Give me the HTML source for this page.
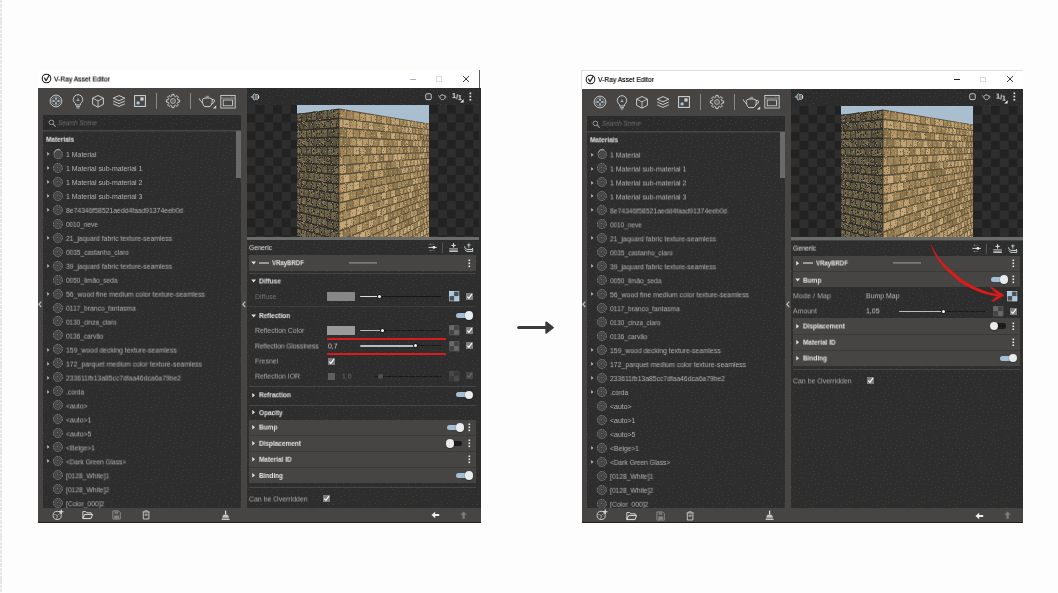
<!DOCTYPE html>
<html lang="en"><head><meta charset="utf-8"><title>V-Ray Asset Editor</title>
<style>
html,body{margin:0;padding:0;}
body{width:1058px;height:593px;position:relative;overflow:hidden;background:#fdfdfd;font-family:"Liberation Sans",sans-serif;}
.win{position:absolute;width:0;height:0;}
.win div,.win svg,.win span{position:absolute;}
.win svg{overflow:visible;}
.t{display:block;height:12px;line-height:12px;font-size:6.95px;white-space:nowrap;transform-origin:0 50%;}
.edge{position:absolute;left:0;top:0;width:1.8px;height:593px;background:repeating-linear-gradient(#e6e6e6 0 3.3px,#fbfbfb 3.3px 4.3px);}
.arrow{position:absolute;left:0;top:0;}
</style></head><body>
<div class="edge"></div>
<svg width="0" height="0" style="position:absolute"><defs><pattern id="dp" width="36" height="36" patternUnits="userSpaceOnUse"><path d="M15 34h1v1h-1zM8 23h1v1h-1zM30 4h1v1h-1zM0 30h1v1h-1zM14 12h1v1h-1zM30 34h1v1h-1zM25 9h1v1h-1zM14 9h1v1h-1zM33 24h1v1h-1zM0 4h1v1h-1zM10 2h1v1h-1zM19 1h1v1h-1zM17 30h1v1h-1zM24 27h1v1h-1zM6 2h1v1h-1zM8 31h1v1h-1zM13 16h1v1h-1zM27 19h1v1h-1zM26 32h1v1h-1zM24 22h1v1h-1zM14 21h1v1h-1zM1 17h1v1h-1zM10 20h1v1h-1zM18 7h1v1h-1zM4 30h1v1h-1zM22 4h1v1h-1zM27 26h1v1h-1zM2 24h1v1h-1zM15 2h1v1h-1zM4 6h1v1h-1zM12 26h1v1h-1zM18 16h1v1h-1zM21 20h1v1h-1zM24 35h1v1h-1zM17 27h1v1h-1zM27 16h1v1h-1zM33 19h1v1h-1zM3 21h1v1h-1zM29 22h1v1h-1zM22 17h1v1h-1zM31 1h1v1h-1zM3 1h1v1h-1zM20 11h1v1h-1zM20 23h1v1h-1zM1 8h1v1h-1zM10 5h1v1h-1zM2 33h1v1h-1zM22 8h1v1h-1zM9 12h1v1h-1zM32 27h1v1h-1zM35 14h1v1h-1zM30 7h1v1h-1zM22 14h1v1h-1zM34 7h1v1h-1zM10 15h1v1h-1zM25 3h1v1h-1zM32 31h1v1h-1zM8 35h1v1h-1z" fill="#3d3c38"/></pattern></defs></svg>
<div class="win" style="left:0px;top:0px"><div style="left:37.50px;top:69.50px;width:441.70px;height:19.00px;background:#ffffff;"></div>
<div style="left:479.20px;top:70.40px;width:1.20px;height:18.00px;background:#5a5a5a;"></div>
<svg style="left:41.00px;top:73.30px;" width="11" height="11" viewBox="0 0 11 11" fill="none"><circle cx="5.5" cy="5.5" r="4.3" stroke="#1c1c1c" stroke-width="1.05"/><path d="M3.3 4.6L5.1 7.7L8.3 2.0" stroke="#1c1c1c" stroke-width="1.15" stroke-linejoin="round"/></svg>
<span class="t" style="text-shadow:0 0 0.5px rgba(0,0,0,.55);left:54px;top:73px;color:#000;transform:perspective(1000px) translate3d(0,0.50px,0.1px) rotateX(0.5deg) scaleX(0.968);">V-Ray Asset Editor</span>
<div style="left:410.00px;top:78.90px;width:6.00px;height:0.90px;background:#9fb6c8;"></div>
<div style="left:436.20px;top:76.00px;width:5.80px;height:5.60px;background:transparent;border:0.8px solid #dadada;box-sizing:border-box;"></div>
<svg style="left:461.80px;top:74.90px;" width="8" height="8" viewBox="0 0 8 8" fill="none"><path d="M1 1L7 7M7 1L1 7" stroke="#1a1a1a" stroke-width="0.85"/></svg>
<div style="left:37.50px;top:88.00px;width:443.20px;height:434.60px;background:#464543;"></div>
<div style="left:479.20px;top:88.00px;width:1.50px;height:419.70px;background:#2c2c2c;"></div>
<div style="left:43.00px;top:115.20px;width:198.20px;height:15.30px;background:#2b2b2b;"></div>
<div style="left:43.00px;top:131.00px;width:198.20px;height:376.70px;background:#2e2e2e;border-top:0.8px solid #3a3a3a;box-sizing:border-box;"></div>
<svg style="left:43.00px;top:115.20px" width="198.20" height="392.50"><rect width="100%" height="100%" fill="url(#dp)"/></svg>
<div style="left:236.40px;top:131.30px;width:4.80px;height:46.70px;background:#6a6a6a;"></div>
<svg style="left:48.40px;top:93.30px;" width="16" height="16" viewBox="0 0 16 16" fill="none"><circle cx="8" cy="8" r="5.9" stroke="#d6d9dc" stroke-width="0.85"/><circle cx="8" cy="8" r="4.2" stroke="#a4a7aa" stroke-width="0.7"/><circle cx="8" cy="8" r="1.5" stroke="#b9bcbe" stroke-width="0.6"/><circle cx="8" cy="5.4" r="1.0" fill="#a9c3d8"/><circle cx="8" cy="10.6" r="1.0" fill="#a9c3d8"/><circle cx="5.4" cy="8" r="1.0" fill="#a9c3d8"/><circle cx="10.6" cy="8" r="1.0" fill="#a9c3d8"/></svg>
<svg style="left:69.50px;top:93.10px;" width="16" height="16" viewBox="0 0 16 16" fill="none"><path d="M5.6 10.6C4.2 9.6 3.3 8.2 3.3 6.4A4.7 4.7 0 0 1 12.7 6.4C12.7 8.2 11.8 9.6 10.4 10.6V12H5.6Z" stroke="#d6d9dc" stroke-width="0.9"/><path d="M6 13.6H10M6.6 15H9.4" stroke="#d6d9dc" stroke-width="0.8"/><path d="M6.6 7.4H9.4M8 5.4V7.4" stroke="#a9c3d8" stroke-width="0.9"/></svg>
<svg style="left:90.30px;top:93.30px;" width="16" height="16" viewBox="0 0 16 16" fill="none"><path d="M8 2.5L13.4 5.1V11.3L8 14.2L2.6 11.3V5.1Z" stroke="#d6d9dc" stroke-width="0.9" stroke-linejoin="round"/><path d="M2.8 5.2L8 7.9L13.2 5.2M8 7.9V14" stroke="#d6d9dc" stroke-width="0.8"/></svg>
<svg style="left:111.40px;top:93.30px;" width="16" height="16" viewBox="0 0 16 16" fill="none"><path d="M8 2.6L13.8 5.2L8 7.8L2.2 5.2Z" stroke="#d6d9dc" stroke-width="0.9" stroke-linejoin="round"/><path d="M2.2 8L8 10.6L13.8 8" stroke="#d6d9dc" stroke-width="0.9" stroke-linejoin="round"/><path d="M2.2 10.8L8 13.4L13.8 10.8" stroke="#d6d9dc" stroke-width="0.9" stroke-linejoin="round"/></svg>
<svg style="left:132.20px;top:93.30px;" width="16" height="16" viewBox="0 0 16 16" fill="none"><rect x="2.6" y="2.6" width="10.8" height="10.8" stroke="#d6d9dc" stroke-width="1"/><rect x="8.4" y="4.4" width="3.2" height="3.2" fill="#cfd3d6"/><circle cx="6.1" cy="9.9" r="1.7" fill="#a9c3d8"/></svg>
<div style="left:156.20px;top:93.20px;width:0.90px;height:16.00px;background:#8a8a8a;"></div>
<svg style="left:165.30px;top:93.20px;" width="16" height="16" viewBox="0 0 16 16" fill="none"><path d="M6.93 1.39L9.07 1.39L9.19 3.14L10.59 3.72L11.92 2.57L13.43 4.08L12.27 5.41L12.86 6.81L14.61 6.93L14.61 9.07L12.86 9.19L12.28 10.59L13.43 11.92L11.92 13.43L10.59 12.27L9.19 12.86L9.07 14.61L6.93 14.61L6.81 12.86L5.41 12.28L4.08 13.43L2.57 11.92L3.73 10.59L3.14 9.19L1.39 9.07L1.39 6.93L3.14 6.81L3.72 5.41L2.57 4.08L4.08 2.57L5.41 3.73L6.81 3.14Z" stroke="#d6d9dc" stroke-width="0.9" stroke-linejoin="round"/><circle cx="8" cy="8" r="2.4" stroke="#d6d9dc" stroke-width="0.8"/><circle cx="8" cy="8" r="0.8" fill="#9a9da0"/></svg>
<div style="left:190.00px;top:93.20px;width:0.90px;height:16.00px;background:#8a8a8a;"></div>
<svg style="left:198.00px;top:94.20px;" width="19" height="16" viewBox="0 0 19 16" fill="none"><rect x="7.8" y="1.8" width="3.2" height="1.8" fill="#8e8e8e"/><path d="M5.2 4.6C7 3.7 11.6 3.7 13.4 4.6C15 6.2 14.2 10.6 12 12.6H6.6C4.4 10.6 3.6 6.2 5.2 4.6Z" stroke="#d6d9dc" stroke-width="0.95" stroke-linejoin="round"/><path d="M4.7 8.6C3 8.2 2 6.4 1.4 4.8" stroke="#d6d9dc" stroke-width="0.95" stroke-linecap="round"/><path d="M14.2 5.6C16.4 4.6 17.2 6.4 16 8.2C15.2 9.3 14.4 9.9 13.6 10.2" stroke="#d6d9dc" stroke-width="0.95" stroke-linecap="round"/><path d="M18.2 11.2V14.6H14.8Z" fill="#d0d0d0"/></svg>
<svg style="left:219.60px;top:93.70px;" width="16" height="15" viewBox="0 0 16 15" fill="none"><rect x="0.8" y="1.4" width="14.4" height="12.6" stroke="#d6d9dc" stroke-width="0.85"/><path d="M1 4.1H15" stroke="#a7acb0" stroke-width="0.8"/><rect x="3.2" y="6" width="9.2" height="5.8" stroke="#d6d9dc" stroke-width="0.8"/><path d="M13.8 5.6V12.6" stroke="#8a8d90" stroke-width="0.8" stroke-dasharray="1 0.8"/><path d="M11.2 2.8H14" stroke="#8a8d90" stroke-width="0.7" stroke-dasharray="0.8 0.6"/></svg>
<svg style="left:47.90px;top:119.20px;" width="8" height="8" viewBox="0 0 8 8" fill="none"><circle cx="3.4" cy="3.4" r="2.3" stroke="#9a9a9a" stroke-width="0.95"/><path d="M5.1 5.1L7.3 7.3" stroke="#9a9a9a" stroke-width="1.1" stroke-linecap="round"/></svg>
<span class="t" style="left:58px;top:117px;color:#6c6c6c;font-style:italic;transform:perspective(1000px) translate3d(0,0.30px,0.1px) rotateX(0.5deg) scaleX(0.892);">Search Scene</span>
<span class="t" style="left:46px;top:133px;color:#e4e4e4;font-weight:700;transform:perspective(1000px) translate3d(0,0.80px,0.1px) rotateX(0.5deg) scaleX(0.934);">Materials</span>
<svg style="left:46.90px;top:152.06px;" width="2.8" height="3.78" viewBox="0 0 4 5.4" fill="none"><path d="M0.3 0.1L3.5 2.7L0.3 5.3Z" fill="#bcbcbc"/></svg>
<svg style="left:52.00px;top:147.85px;" width="12" height="12" viewBox="0 0 12 12" fill="none"><circle cx="6.2" cy="6.4" r="4.1" fill="#3a3a3a" stroke="#8e8e8e" stroke-width="0.7"/><circle cx="6.3" cy="6.6" r="2.6" fill="#474747" stroke="#6a6a6a" stroke-width="0.5" stroke-dasharray="1.2 0.7"/><path d="M2.2 4.6A4.6 4.6 0 0 1 6.4 1.2" stroke="#b4b4b4" stroke-width="0.8"/><path d="M5.6 1.9L7.1 0.9L8.4 2.4" stroke="#b4b4b4" stroke-width="0.7"/></svg>
<span class="t" style="left:66px;top:149px;color:#b2b2b2;transform:perspective(1000px) translate3d(0,0.05px,0.1px) rotateX(0.5deg);">1 Material</span>
<svg style="left:46.90px;top:166.03px;" width="2.8" height="3.78" viewBox="0 0 4 5.4" fill="none"><path d="M0.3 0.1L3.5 2.7L0.3 5.3Z" fill="#bcbcbc"/></svg>
<svg style="left:52.00px;top:161.82px;" width="12" height="12" viewBox="0 0 12 12" fill="none"><circle cx="5.9" cy="6" r="4.5" fill="#3c3c3c" stroke="#949494" stroke-width="0.7" stroke-dasharray="2.2 0.5"/><circle cx="5.9" cy="6" r="2.9" fill="#444" stroke="#6e6e6e" stroke-width="0.55" stroke-dasharray="1.3 0.8"/><circle cx="5.7" cy="5.6" r="0.5" fill="#8a8a8a"/></svg>
<span class="t" style="left:66px;top:163px;color:#b2b2b2;transform:perspective(1000px) translate3d(0,0.02px,0.1px) rotateX(0.5deg);">1 Material sub-material 1</span>
<svg style="left:46.90px;top:180.00px;" width="2.8" height="3.78" viewBox="0 0 4 5.4" fill="none"><path d="M0.3 0.1L3.5 2.7L0.3 5.3Z" fill="#bcbcbc"/></svg>
<svg style="left:52.00px;top:175.79px;" width="12" height="12" viewBox="0 0 12 12" fill="none"><circle cx="5.9" cy="6" r="4.5" fill="#3c3c3c" stroke="#949494" stroke-width="0.7" stroke-dasharray="2.2 0.5"/><circle cx="5.9" cy="6" r="2.9" fill="#444" stroke="#6e6e6e" stroke-width="0.55" stroke-dasharray="1.3 0.8"/><circle cx="5.7" cy="5.6" r="0.5" fill="#8a8a8a"/></svg>
<span class="t" style="left:66px;top:176px;color:#b2b2b2;transform:perspective(1000px) translate3d(0,0.99px,0.1px) rotateX(0.5deg);">1 Material sub-material 2</span>
<svg style="left:46.90px;top:193.97px;" width="2.8" height="3.78" viewBox="0 0 4 5.4" fill="none"><path d="M0.3 0.1L3.5 2.7L0.3 5.3Z" fill="#bcbcbc"/></svg>
<svg style="left:52.00px;top:189.76px;" width="12" height="12" viewBox="0 0 12 12" fill="none"><circle cx="5.9" cy="6" r="4.5" fill="#3c3c3c" stroke="#949494" stroke-width="0.7" stroke-dasharray="2.2 0.5"/><circle cx="5.9" cy="6" r="2.9" fill="#444" stroke="#6e6e6e" stroke-width="0.55" stroke-dasharray="1.3 0.8"/><circle cx="5.7" cy="5.6" r="0.5" fill="#8a8a8a"/></svg>
<span class="t" style="left:66px;top:190px;color:#b2b2b2;transform:perspective(1000px) translate3d(0,0.96px,0.1px) rotateX(0.5deg);">1 Material sub-material 3</span>
<svg style="left:46.90px;top:207.94px;" width="2.8" height="3.78" viewBox="0 0 4 5.4" fill="none"><path d="M0.3 0.1L3.5 2.7L0.3 5.3Z" fill="#bcbcbc"/></svg>
<svg style="left:52.00px;top:203.73px;" width="12" height="12" viewBox="0 0 12 12" fill="none"><circle cx="5.9" cy="6" r="4.5" fill="#3c3c3c" stroke="#949494" stroke-width="0.7" stroke-dasharray="2.2 0.5"/><circle cx="5.9" cy="6" r="2.9" fill="#444" stroke="#6e6e6e" stroke-width="0.55" stroke-dasharray="1.3 0.8"/><circle cx="5.7" cy="5.6" r="0.5" fill="#8a8a8a"/></svg>
<span class="t" style="left:66px;top:204px;color:#b2b2b2;transform:perspective(1000px) translate3d(0,0.93px,0.1px) rotateX(0.5deg) scaleX(0.979);">8e74346f58521aedd4faad91374eeb0d</span>
<svg style="left:52.00px;top:217.70px;" width="12" height="12" viewBox="0 0 12 12" fill="none"><circle cx="5.9" cy="6" r="4.5" fill="#3c3c3c" stroke="#949494" stroke-width="0.7" stroke-dasharray="2.2 0.5"/><circle cx="5.9" cy="6" r="2.9" fill="#444" stroke="#6e6e6e" stroke-width="0.55" stroke-dasharray="1.3 0.8"/><circle cx="5.7" cy="5.6" r="0.5" fill="#8a8a8a"/></svg>
<span class="t" style="left:66px;top:218px;color:#b2b2b2;transform:perspective(1000px) translate3d(0,0.90px,0.1px) rotateX(0.5deg) scaleX(0.925);">0010_neve</span>
<svg style="left:46.90px;top:235.88px;" width="2.8" height="3.78" viewBox="0 0 4 5.4" fill="none"><path d="M0.3 0.1L3.5 2.7L0.3 5.3Z" fill="#bcbcbc"/></svg>
<svg style="left:52.00px;top:231.67px;" width="12" height="12" viewBox="0 0 12 12" fill="none"><circle cx="5.9" cy="6" r="4.5" fill="#3c3c3c" stroke="#949494" stroke-width="0.7" stroke-dasharray="2.2 0.5"/><circle cx="5.9" cy="6" r="2.9" fill="#444" stroke="#6e6e6e" stroke-width="0.55" stroke-dasharray="1.3 0.8"/><circle cx="5.7" cy="5.6" r="0.5" fill="#8a8a8a"/></svg>
<span class="t" style="left:66px;top:232px;color:#b2b2b2;transform:perspective(1000px) translate3d(0,0.87px,0.1px) rotateX(0.5deg) scaleX(0.978);">21_jaquard fabric texture-seamless</span>
<svg style="left:52.00px;top:245.64px;" width="12" height="12" viewBox="0 0 12 12" fill="none"><circle cx="5.9" cy="6" r="4.5" fill="#3c3c3c" stroke="#949494" stroke-width="0.7" stroke-dasharray="2.2 0.5"/><circle cx="5.9" cy="6" r="2.9" fill="#444" stroke="#6e6e6e" stroke-width="0.55" stroke-dasharray="1.3 0.8"/><circle cx="5.7" cy="5.6" r="0.5" fill="#8a8a8a"/></svg>
<span class="t" style="left:66px;top:246px;color:#b2b2b2;transform:perspective(1000px) translate3d(0,0.84px,0.1px) rotateX(0.5deg) scaleX(0.945);">0035_castanho_claro</span>
<svg style="left:46.90px;top:263.82px;" width="2.8" height="3.78" viewBox="0 0 4 5.4" fill="none"><path d="M0.3 0.1L3.5 2.7L0.3 5.3Z" fill="#bcbcbc"/></svg>
<svg style="left:52.00px;top:259.61px;" width="12" height="12" viewBox="0 0 12 12" fill="none"><circle cx="5.9" cy="6" r="4.5" fill="#3c3c3c" stroke="#949494" stroke-width="0.7" stroke-dasharray="2.2 0.5"/><circle cx="5.9" cy="6" r="2.9" fill="#444" stroke="#6e6e6e" stroke-width="0.55" stroke-dasharray="1.3 0.8"/><circle cx="5.7" cy="5.6" r="0.5" fill="#8a8a8a"/></svg>
<span class="t" style="left:66px;top:260px;color:#b2b2b2;transform:perspective(1000px) translate3d(0,0.81px,0.1px) rotateX(0.5deg) scaleX(0.978);">39_jaquard fabric texture-seamless</span>
<svg style="left:52.00px;top:273.58px;" width="12" height="12" viewBox="0 0 12 12" fill="none"><circle cx="5.9" cy="6" r="4.5" fill="#3c3c3c" stroke="#949494" stroke-width="0.7" stroke-dasharray="2.2 0.5"/><circle cx="5.9" cy="6" r="2.9" fill="#444" stroke="#6e6e6e" stroke-width="0.55" stroke-dasharray="1.3 0.8"/><circle cx="5.7" cy="5.6" r="0.5" fill="#8a8a8a"/></svg>
<span class="t" style="left:66px;top:274px;color:#b2b2b2;transform:perspective(1000px) translate3d(0,0.78px,0.1px) rotateX(0.5deg) scaleX(0.938);">0050_limão_seda</span>
<svg style="left:46.90px;top:291.76px;" width="2.8" height="3.78" viewBox="0 0 4 5.4" fill="none"><path d="M0.3 0.1L3.5 2.7L0.3 5.3Z" fill="#bcbcbc"/></svg>
<svg style="left:52.00px;top:287.55px;" width="12" height="12" viewBox="0 0 12 12" fill="none"><circle cx="5.9" cy="6" r="4.5" fill="#3c3c3c" stroke="#949494" stroke-width="0.7" stroke-dasharray="2.2 0.5"/><circle cx="5.9" cy="6" r="2.9" fill="#444" stroke="#6e6e6e" stroke-width="0.55" stroke-dasharray="1.3 0.8"/><circle cx="5.7" cy="5.6" r="0.5" fill="#8a8a8a"/></svg>
<span class="t" style="left:66px;top:288px;color:#b2b2b2;transform:perspective(1000px) translate3d(0,0.75px,0.1px) rotateX(0.5deg) scaleX(0.996);">56_wood fine medium color texture-seamless</span>
<svg style="left:52.00px;top:301.52px;" width="12" height="12" viewBox="0 0 12 12" fill="none"><circle cx="5.9" cy="6" r="4.5" fill="#3c3c3c" stroke="#949494" stroke-width="0.7" stroke-dasharray="2.2 0.5"/><circle cx="5.9" cy="6" r="2.9" fill="#444" stroke="#6e6e6e" stroke-width="0.55" stroke-dasharray="1.3 0.8"/><circle cx="5.7" cy="5.6" r="0.5" fill="#8a8a8a"/></svg>
<span class="t" style="left:66px;top:302px;color:#b2b2b2;transform:perspective(1000px) translate3d(0,0.72px,0.1px) rotateX(0.5deg) scaleX(0.963);">0117_branco_fantasma</span>
<svg style="left:52.00px;top:315.49px;" width="12" height="12" viewBox="0 0 12 12" fill="none"><circle cx="5.9" cy="6" r="4.5" fill="#3c3c3c" stroke="#949494" stroke-width="0.7" stroke-dasharray="2.2 0.5"/><circle cx="5.9" cy="6" r="2.9" fill="#444" stroke="#6e6e6e" stroke-width="0.55" stroke-dasharray="1.3 0.8"/><circle cx="5.7" cy="5.6" r="0.5" fill="#8a8a8a"/></svg>
<span class="t" style="left:66px;top:316px;color:#b2b2b2;transform:perspective(1000px) translate3d(0,0.69px,0.1px) rotateX(0.5deg) scaleX(0.93);">0130_cinza_claro</span>
<svg style="left:52.00px;top:329.46px;" width="12" height="12" viewBox="0 0 12 12" fill="none"><circle cx="5.9" cy="6" r="4.5" fill="#3c3c3c" stroke="#949494" stroke-width="0.7" stroke-dasharray="2.2 0.5"/><circle cx="5.9" cy="6" r="2.9" fill="#444" stroke="#6e6e6e" stroke-width="0.55" stroke-dasharray="1.3 0.8"/><circle cx="5.7" cy="5.6" r="0.5" fill="#8a8a8a"/></svg>
<span class="t" style="left:66px;top:330px;color:#b2b2b2;transform:perspective(1000px) translate3d(0,0.66px,0.1px) rotateX(0.5deg) scaleX(0.93);">0136_carvão</span>
<svg style="left:46.90px;top:347.64px;" width="2.8" height="3.78" viewBox="0 0 4 5.4" fill="none"><path d="M0.3 0.1L3.5 2.7L0.3 5.3Z" fill="#bcbcbc"/></svg>
<svg style="left:52.00px;top:343.43px;" width="12" height="12" viewBox="0 0 12 12" fill="none"><circle cx="5.9" cy="6" r="4.5" fill="#3c3c3c" stroke="#949494" stroke-width="0.7" stroke-dasharray="2.2 0.5"/><circle cx="5.9" cy="6" r="2.9" fill="#444" stroke="#6e6e6e" stroke-width="0.55" stroke-dasharray="1.3 0.8"/><circle cx="5.7" cy="5.6" r="0.5" fill="#8a8a8a"/></svg>
<span class="t" style="left:66px;top:344px;color:#b2b2b2;transform:perspective(1000px) translate3d(0,0.63px,0.1px) rotateX(0.5deg) scaleX(0.984);">159_wood decking texture-seamless</span>
<svg style="left:46.90px;top:361.61px;" width="2.8" height="3.78" viewBox="0 0 4 5.4" fill="none"><path d="M0.3 0.1L3.5 2.7L0.3 5.3Z" fill="#bcbcbc"/></svg>
<svg style="left:52.00px;top:357.40px;" width="12" height="12" viewBox="0 0 12 12" fill="none"><circle cx="5.9" cy="6" r="4.5" fill="#3c3c3c" stroke="#949494" stroke-width="0.7" stroke-dasharray="2.2 0.5"/><circle cx="5.9" cy="6" r="2.9" fill="#444" stroke="#6e6e6e" stroke-width="0.55" stroke-dasharray="1.3 0.8"/><circle cx="5.7" cy="5.6" r="0.5" fill="#8a8a8a"/></svg>
<span class="t" style="left:66px;top:358px;color:#b2b2b2;transform:perspective(1000px) translate3d(0,0.60px,0.1px) rotateX(0.5deg) scaleX(0.991);">172_parquet medium color texture-seamless</span>
<svg style="left:46.90px;top:375.58px;" width="2.8" height="3.78" viewBox="0 0 4 5.4" fill="none"><path d="M0.3 0.1L3.5 2.7L0.3 5.3Z" fill="#bcbcbc"/></svg>
<svg style="left:52.00px;top:371.37px;" width="12" height="12" viewBox="0 0 12 12" fill="none"><circle cx="5.9" cy="6" r="4.5" fill="#3c3c3c" stroke="#949494" stroke-width="0.7" stroke-dasharray="2.2 0.5"/><circle cx="5.9" cy="6" r="2.9" fill="#444" stroke="#6e6e6e" stroke-width="0.55" stroke-dasharray="1.3 0.8"/><circle cx="5.7" cy="5.6" r="0.5" fill="#8a8a8a"/></svg>
<span class="t" style="left:66px;top:372px;color:#b2b2b2;transform:perspective(1000px) translate3d(0,0.57px,0.1px) rotateX(0.5deg) scaleX(0.975);">233611fb13a85cc7dfaa46dca6a79be2</span>
<svg style="left:46.90px;top:389.55px;" width="2.8" height="3.78" viewBox="0 0 4 5.4" fill="none"><path d="M0.3 0.1L3.5 2.7L0.3 5.3Z" fill="#bcbcbc"/></svg>
<svg style="left:52.00px;top:385.34px;" width="12" height="12" viewBox="0 0 12 12" fill="none"><circle cx="5.9" cy="6" r="4.5" fill="#3c3c3c" stroke="#949494" stroke-width="0.7" stroke-dasharray="2.2 0.5"/><circle cx="5.9" cy="6" r="2.9" fill="#444" stroke="#6e6e6e" stroke-width="0.55" stroke-dasharray="1.3 0.8"/><circle cx="5.7" cy="5.6" r="0.5" fill="#8a8a8a"/></svg>
<span class="t" style="left:66px;top:386px;color:#b2b2b2;transform:perspective(1000px) translate3d(0,0.54px,0.1px) rotateX(0.5deg) scaleX(0.94);">.corda</span>
<svg style="left:52.00px;top:399.31px;" width="12" height="12" viewBox="0 0 12 12" fill="none"><circle cx="5.9" cy="6" r="4.5" fill="#3c3c3c" stroke="#949494" stroke-width="0.7" stroke-dasharray="2.2 0.5"/><circle cx="5.9" cy="6" r="2.9" fill="#444" stroke="#6e6e6e" stroke-width="0.55" stroke-dasharray="1.3 0.8"/><circle cx="5.7" cy="5.6" r="0.5" fill="#8a8a8a"/></svg>
<span class="t" style="left:66px;top:400px;color:#b2b2b2;transform:perspective(1000px) translate3d(0,0.51px,0.1px) rotateX(0.5deg);">&lt;auto&gt;</span>
<svg style="left:52.00px;top:413.28px;" width="12" height="12" viewBox="0 0 12 12" fill="none"><circle cx="5.9" cy="6" r="4.5" fill="#3c3c3c" stroke="#949494" stroke-width="0.7" stroke-dasharray="2.2 0.5"/><circle cx="5.9" cy="6" r="2.9" fill="#444" stroke="#6e6e6e" stroke-width="0.55" stroke-dasharray="1.3 0.8"/><circle cx="5.7" cy="5.6" r="0.5" fill="#8a8a8a"/></svg>
<span class="t" style="left:66px;top:414px;color:#b2b2b2;transform:perspective(1000px) translate3d(0,0.48px,0.1px) rotateX(0.5deg);">&lt;auto&gt;1</span>
<svg style="left:52.00px;top:427.25px;" width="12" height="12" viewBox="0 0 12 12" fill="none"><circle cx="5.9" cy="6" r="4.5" fill="#3c3c3c" stroke="#949494" stroke-width="0.7" stroke-dasharray="2.2 0.5"/><circle cx="5.9" cy="6" r="2.9" fill="#444" stroke="#6e6e6e" stroke-width="0.55" stroke-dasharray="1.3 0.8"/><circle cx="5.7" cy="5.6" r="0.5" fill="#8a8a8a"/></svg>
<span class="t" style="left:66px;top:428px;color:#b2b2b2;transform:perspective(1000px) translate3d(0,0.45px,0.1px) rotateX(0.5deg);">&lt;auto&gt;5</span>
<svg style="left:46.90px;top:445.43px;" width="2.8" height="3.78" viewBox="0 0 4 5.4" fill="none"><path d="M0.3 0.1L3.5 2.7L0.3 5.3Z" fill="#bcbcbc"/></svg>
<svg style="left:52.00px;top:441.22px;" width="12" height="12" viewBox="0 0 12 12" fill="none"><circle cx="5.9" cy="6" r="4.5" fill="#3c3c3c" stroke="#949494" stroke-width="0.7" stroke-dasharray="2.2 0.5"/><circle cx="5.9" cy="6" r="2.9" fill="#444" stroke="#6e6e6e" stroke-width="0.55" stroke-dasharray="1.3 0.8"/><circle cx="5.7" cy="5.6" r="0.5" fill="#8a8a8a"/></svg>
<span class="t" style="left:66px;top:442px;color:#b2b2b2;transform:perspective(1000px) translate3d(0,0.42px,0.1px) rotateX(0.5deg) scaleX(0.98);">&lt;Beige&gt;1</span>
<svg style="left:46.90px;top:459.40px;" width="2.8" height="3.78" viewBox="0 0 4 5.4" fill="none"><path d="M0.3 0.1L3.5 2.7L0.3 5.3Z" fill="#bcbcbc"/></svg>
<svg style="left:52.00px;top:455.19px;" width="12" height="12" viewBox="0 0 12 12" fill="none"><circle cx="5.9" cy="6" r="4.5" fill="#3c3c3c" stroke="#949494" stroke-width="0.7" stroke-dasharray="2.2 0.5"/><circle cx="5.9" cy="6" r="2.9" fill="#444" stroke="#6e6e6e" stroke-width="0.55" stroke-dasharray="1.3 0.8"/><circle cx="5.7" cy="5.6" r="0.5" fill="#8a8a8a"/></svg>
<span class="t" style="left:66px;top:456px;color:#b2b2b2;transform:perspective(1000px) translate3d(0,0.39px,0.1px) rotateX(0.5deg) scaleX(0.947);">&lt;Dark Green Glass&gt;</span>
<svg style="left:52.00px;top:469.16px;" width="12" height="12" viewBox="0 0 12 12" fill="none"><circle cx="5.9" cy="6" r="4.5" fill="#3c3c3c" stroke="#949494" stroke-width="0.7" stroke-dasharray="2.2 0.5"/><circle cx="5.9" cy="6" r="2.9" fill="#444" stroke="#6e6e6e" stroke-width="0.55" stroke-dasharray="1.3 0.8"/><circle cx="5.7" cy="5.6" r="0.5" fill="#8a8a8a"/></svg>
<span class="t" style="left:66px;top:470px;color:#b2b2b2;transform:perspective(1000px) translate3d(0,0.36px,0.1px) rotateX(0.5deg) scaleX(0.964);">[0128_White]1</span>
<svg style="left:52.00px;top:483.13px;" width="12" height="12" viewBox="0 0 12 12" fill="none"><circle cx="5.9" cy="6" r="4.5" fill="#3c3c3c" stroke="#949494" stroke-width="0.7" stroke-dasharray="2.2 0.5"/><circle cx="5.9" cy="6" r="2.9" fill="#444" stroke="#6e6e6e" stroke-width="0.55" stroke-dasharray="1.3 0.8"/><circle cx="5.7" cy="5.6" r="0.5" fill="#8a8a8a"/></svg>
<span class="t" style="left:66px;top:484px;color:#b2b2b2;transform:perspective(1000px) translate3d(0,0.33px,0.1px) rotateX(0.5deg) scaleX(0.964);">[0128_White]2</span>
<svg style="left:52.00px;top:497.10px;" width="12" height="12" viewBox="0 0 12 12" fill="none"><circle cx="5.9" cy="6" r="4.5" fill="#3c3c3c" stroke="#949494" stroke-width="0.7" stroke-dasharray="2.2 0.5"/><circle cx="5.9" cy="6" r="2.9" fill="#444" stroke="#6e6e6e" stroke-width="0.55" stroke-dasharray="1.3 0.8"/><circle cx="5.7" cy="5.6" r="0.5" fill="#8a8a8a"/></svg>
<span class="t" style="left:66px;top:498px;color:#b2b2b2;transform:perspective(1000px) translate3d(0,0.30px,0.1px) rotateX(0.5deg) scaleX(0.964);">[Color_000]2</span>
<div style="left:37.50px;top:507.70px;width:443.20px;height:14.90px;background:#464543;"></div>
<div style="left:37.50px;top:521.90px;width:443.20px;height:0.70px;background:#222222;"></div>
<svg style="left:52.40px;top:508.60px;" width="12" height="12" viewBox="0 0 12 12" fill="none"><circle cx="5.2" cy="6.4" r="4.1" stroke="#d8d8d8" stroke-width="0.9"/><path d="M2.4 5.2L5.4 6.6L4.6 9.8M5.4 6.6L7.6 4.4" stroke="#bdbdbd" stroke-width="0.7"/><path d="M9.2 0.6V5M7 2.8H11.4" stroke="#eaeaea" stroke-width="1.05"/></svg>
<svg style="left:81.70px;top:510.40px;" width="11.4" height="10" viewBox="0 0 11.4 10" fill="none"><path d="M0.8 8.6V1.6H3.8L4.8 2.8H9.2V4.2" stroke="#e0e0e0" stroke-width="0.9" stroke-linejoin="round"/><path d="M0.9 8.6L2.6 4.4H10.6L9 8.6Z" stroke="#e8e8e8" stroke-width="0.95" stroke-linejoin="round" fill="#4d4d4d"/></svg>
<svg style="left:111.70px;top:510.40px;" width="9.2" height="10" viewBox="0 0 9.2 10" fill="none"><path d="M0.9 0.9H6.6L8.3 2.6V9.1H0.9Z" stroke="#8e8e8e" stroke-width="0.9" stroke-linejoin="round"/><rect x="2.6" y="1.2" width="3.6" height="2.6" fill="#7c7c7c"/><rect x="2.3" y="5.4" width="4.6" height="3.4" fill="#868686"/></svg>
<svg style="left:141.50px;top:510.00px;" width="8.2" height="10" viewBox="0 0 8.2 10" fill="none"><path d="M0.6 1.9H7.6" stroke="#d8d8d8" stroke-width="0.95"/><path d="M2.8 1.6V0.6H5.4V1.6" stroke="#c4c4c4" stroke-width="0.7"/><path d="M1.3 2.2V9H6.9V2.2" stroke="#d0d0d0" stroke-width="0.9" stroke-linejoin="round"/><rect x="2.6" y="3.6" width="3" height="2.2" fill="#9c9c9c"/></svg>
<svg style="left:221.40px;top:509.70px;" width="9.2" height="10.4" viewBox="0 0 9.2 10.4" fill="none"><path d="M4.6 0.6V4.6" stroke="#e8e8e8" stroke-width="1.2"/><path d="M2.4 4.8H6.8L7.8 7H1.4Z" fill="#c8c8c8"/><path d="M0.6 9.4H8.6M1.2 7.9H8" stroke="#e4e4e4" stroke-width="0.9"/></svg>
<svg style="left:430.90px;top:511.00px;" width="8.6" height="8" viewBox="0 0 8.6 8" fill="none"><path d="M0.5 4L4.2 0.8V2.9H8.2V5.1H4.2V7.2Z" fill="#f0f0f0"/></svg>
<svg style="left:460.40px;top:510.90px;" width="7.2" height="8.2" viewBox="0 0 7.2 8.2" fill="none"><path d="M3.6 0.4L6.8 3.8H4.8V7.8H2.4V3.8H0.4Z" fill="#7c7c7c"/></svg>
<svg style="left:38.20px;top:300.70px;" width="4" height="6.6" viewBox="0 0 4 6.6" fill="none"><path d="M3.3 0.6L0.8 3.3L3.3 6" stroke="#b8b8b8" stroke-width="1.3" stroke-linejoin="miter"/></svg>
<svg style="left:241.80px;top:300.70px;" width="4" height="6.6" viewBox="0 0 4 6.6" fill="none"><path d="M3.3 0.6L0.8 3.3L3.3 6" stroke="#b8b8b8" stroke-width="1.3" stroke-linejoin="miter"/></svg>
<div style="left:247.00px;top:88.00px;width:232.20px;height:17.00px;background:#2c2c2c;"></div>
<svg style="left:247.00px;top:88.00px" width="232.20" height="17.00"><rect width="100%" height="100%" fill="url(#dp)"/></svg>
<div style="left:247px;top:105px;width:50px;height:131.9px;background-color:#222222;background-image:conic-gradient(#2e2e2e 25%,#222222 0 50%,#2e2e2e 0 75%,#222222 0);background-size:17.6px 17.44px;background-position:-9.1px 0px;"></div>
<div style="left:429px;top:105px;width:50.20px;height:131.9px;background-color:#222222;background-image:conic-gradient(#2e2e2e 25%,#222222 0 50%,#2e2e2e 0 75%,#222222 0);background-size:17.6px 17.44px;background-position:0.4px 0px;"></div>
<div style="left:296.9px;top:105px;width:132.1px;height:132.3px;overflow:hidden"><svg width="132.1" height="132.3" viewBox="0 0 132.1 132.3" style="left:0;top:0"><g id="wallg"><defs><pattern id="wdl" width="20" height="20" patternUnits="userSpaceOnUse"><path d="M14 17h1v1h-1zM19 0h1v1h-1zM6 1h1v1h-1zM0 1h1v1h-1zM17 6h1v1h-1zM4 6h1v1h-1zM11 4h1v1h-1zM19 2h1v1h-1z" fill="#2f2e2b" opacity="1.0"/><path d="M14 16h1v1h-1zM15 19h1v1h-1zM5 19h1v1h-1zM16 2h1v1h-1zM10 14h1v1h-1zM9 15h1v1h-1zM0 2h1v1h-1zM3 12h1v1h-1zM9 12h1v1h-1zM0 13h1v1h-1zM4 7h1v1h-1zM16 6h1v1h-1zM13 12h1v1h-1zM0 8h1v1h-1zM5 12h1v1h-1zM18 3h1v1h-1zM8 0h1v1h-1zM2 2h1v1h-1zM7 0h1v1h-1zM11 11h1v1h-1zM14 4h1v1h-1zM15 18h1v1h-1zM12 15h1v1h-1zM2 13h1v1h-1zM3 3h1v1h-1zM16 5h1v1h-1zM19 19h1v1h-1zM14 7h1v1h-1zM11 16h1v1h-1zM10 16h1v1h-1zM4 18h1v1h-1zM9 1h1v1h-1zM10 4h1v1h-1zM17 11h1v1h-1z" fill="#2b2b2a" opacity="1.0"/><path d="M6 5h1v1h-1zM4 2h1v1h-1zM8 13h1v1h-1z" fill="#6a5f47" opacity="1.0"/><path d="M3 14h1v1h-1zM7 16h1v1h-1zM19 15h1v1h-1zM1 5h1v1h-1z" fill="#8a744e" opacity="1.0"/><path d="M1 19h1v1h-1zM12 12h1v1h-1zM10 9h1v1h-1zM12 8h1v1h-1z" fill="#3a3830" opacity="1.0"/><path d="M14 19h1v1h-1zM2 14h1v1h-1zM2 18h1v1h-1zM15 5h1v1h-1zM6 18h1v1h-1zM12 5h1v1h-1zM15 17h1v1h-1z" fill="#7f8a98" opacity="1.0"/><path d="M1 6h1v1h-1zM6 16h1v1h-1zM0 0h1v1h-1zM12 13h1v1h-1zM9 0h1v1h-1zM4 9h1v1h-1zM19 7h1v1h-1zM5 17h1v1h-1zM16 8h1v1h-1zM8 6h1v1h-1z" fill="#9f8355" opacity="1.0"/><path d="M2 8h1v1h-1zM6 8h1v1h-1zM2 9h1v1h-1zM0 15h1v1h-1z" fill="#33322e" opacity="1.0"/></pattern><pattern id="wdr" width="20" height="20" patternUnits="userSpaceOnUse"><path d="M4 10h1v1h-1zM4 15h1v1h-1zM1 2h1v1h-1zM8 18h1v1h-1zM6 0h1v1h-1zM18 16h1v1h-1zM12 2h1v1h-1zM17 10h1v1h-1z" fill="#cdae7c" opacity="1.0"/><path d="M2 15h1v1h-1zM0 19h1v1h-1zM14 17h1v1h-1zM16 16h1v1h-1zM9 19h1v1h-1zM15 8h1v1h-1zM10 2h1v1h-1zM8 19h1v1h-1zM9 18h1v1h-1zM7 4h1v1h-1zM3 14h1v1h-1zM17 11h1v1h-1z" fill="#87704a" opacity="1.0"/><path d="M13 0h1v1h-1zM3 8h1v1h-1zM18 14h1v1h-1zM5 3h1v1h-1zM6 13h1v1h-1zM10 19h1v1h-1zM4 12h1v1h-1zM6 6h1v1h-1zM19 5h1v1h-1zM7 2h1v1h-1zM12 4h1v1h-1zM2 1h1v1h-1z" fill="#6b5a3e" opacity="1.0"/><path d="M18 0h1v1h-1zM12 12h1v1h-1zM3 15h1v1h-1zM19 6h1v1h-1zM12 7h1v1h-1zM0 15h1v1h-1zM8 11h1v1h-1zM0 12h1v1h-1zM0 11h1v1h-1z" fill="#9d8357" opacity="1.0"/><path d="M2 2h1v1h-1zM10 12h1v1h-1zM5 10h1v1h-1zM8 6h1v1h-1zM16 15h1v1h-1zM8 5h1v1h-1zM14 6h1v1h-1zM14 10h1v1h-1zM6 3h1v1h-1z" fill="#c3a474" opacity="1.0"/><path d="M15 0h1v1h-1zM11 9h1v1h-1zM14 15h1v1h-1zM13 6h1v1h-1zM10 6h1v1h-1zM1 5h1v1h-1zM3 6h1v1h-1z" fill="#7a6646" opacity="1.0"/></pattern></defs><rect width="132.1" height="132.3" fill="#a9bfd0"/><path d="M0.00 8.78L3.52 8.35L7.05 7.92L10.57 7.49L14.10 7.06L17.62 6.62L21.15 6.19L24.67 5.76L28.20 5.33L31.72 4.90L35.25 4.46L38.77 4.03L42.30 3.60L42.30 134.30L0.00 134.30Z" fill="#2d2c29"/><path d="M42.30 3.60L49.78 4.85L57.27 6.10L64.75 7.34L72.23 8.59L79.72 9.84L87.20 11.09L94.68 12.34L102.17 13.58L109.65 14.83L117.13 16.08L124.62 17.33L132.10 18.58L132.10 134.30L42.30 134.30Z" fill="#574f3b"/><path d="M42.3 4.8L49.2 5.9L49.2 13.4L42.3 12.6ZM49.8 6.0L55.9 7.0L55.9 14.3L49.8 13.5ZM79.7 10.8L84.2 11.5L84.2 17.9L79.7 17.3ZM89.5 12.4L93.5 13.0L93.5 19.1L89.5 18.6ZM102.6 14.5L105.9 15.0L105.9 20.7L102.6 20.3ZM77.1 18.4L81.7 18.9L81.7 25.4L77.1 25.0ZM82.3 19.0L86.6 19.5L86.6 25.8L82.3 25.4ZM96.3 20.7L100.0 21.1L100.0 27.0L96.3 26.7ZM100.5 21.2L104.0 21.6L104.0 27.3L100.5 27.0ZM115.6 23.0L118.4 23.4L118.4 28.6L115.6 28.3ZM122.2 23.8L124.7 24.1L124.7 29.1L122.2 28.9ZM56.5 24.7L62.2 25.1L62.2 32.3L56.5 32.0ZM68.8 25.7L73.8 26.1L73.8 32.8L68.8 32.6ZM89.5 27.3L93.5 27.7L93.5 33.7L89.5 33.5ZM102.6 28.4L105.9 28.6L105.9 34.3L102.6 34.1ZM120.6 29.8L123.2 30.0L123.2 35.1L120.6 35.0ZM126.7 30.3L129.1 30.5L129.1 35.4L126.7 35.3ZM42.3 33.0L45.7 33.1L45.7 40.8L42.3 40.8ZM77.1 34.3L81.7 34.5L81.7 41.0L77.1 40.9ZM87.2 34.7L91.3 34.9L91.3 41.0L87.2 41.0ZM91.8 34.9L95.7 35.1L95.7 41.0L91.8 41.0ZM96.3 35.1L100.0 35.2L100.0 41.1L96.3 41.0ZM42.3 42.4L49.2 42.3L49.2 49.9L42.3 50.1ZM49.8 42.3L55.9 42.3L55.9 49.7L49.8 49.9ZM89.5 42.3L93.5 42.3L93.5 48.3L89.5 48.5ZM113.8 42.2L116.7 42.2L116.7 47.5L113.8 47.6ZM123.7 42.2L126.2 42.2L126.2 47.2L123.7 47.3ZM129.7 42.2L131.9 42.2L131.9 47.0L129.7 47.1ZM46.3 51.6L52.6 51.3L52.6 58.8L46.3 59.2ZM53.2 51.3L59.1 51.0L59.1 58.3L53.2 58.7ZM91.8 49.7L95.7 49.5L95.7 55.5L91.8 55.8ZM108.4 49.0L111.5 48.8L111.5 54.3L108.4 54.5ZM115.6 48.6L118.4 48.5L118.4 53.8L115.6 54.0ZM118.9 48.5L121.6 48.4L121.6 53.5L118.9 53.7ZM128.2 48.1L130.5 48.0L130.5 52.8L128.2 53.0ZM131.1 48.0L131.9 48.0L131.9 52.7L131.1 52.8ZM94.1 56.8L97.9 56.5L97.9 62.4L94.1 62.9ZM102.6 56.1L105.9 55.9L105.9 61.5L102.6 61.9ZM123.7 54.4L126.2 54.2L126.2 59.1L123.7 59.4ZM126.7 54.1L129.1 53.9L129.1 58.8L126.7 59.1ZM53.2 69.2L59.1 68.5L59.1 75.7L53.2 76.6ZM65.8 67.6L71.1 67.0L71.1 73.8L65.8 74.6ZM112.1 61.9L115.0 61.5L115.0 66.9L112.1 67.3ZM118.9 61.0L121.6 60.7L121.6 65.8L118.9 66.3ZM128.2 59.9L130.5 59.6L130.5 64.4L128.2 64.8ZM131.1 59.5L131.9 59.4L131.9 64.2L131.1 64.3ZM62.8 76.6L68.2 75.7L68.2 82.6L62.8 83.7ZM68.8 75.6L73.8 74.8L73.8 81.5L68.8 82.5ZM74.4 74.7L79.2 73.9L79.2 80.4L74.4 81.4ZM79.7 73.8L84.2 73.0L84.2 79.4L79.7 80.3ZM89.5 72.2L93.5 71.5L93.5 77.6L89.5 78.4ZM94.1 71.4L97.9 70.8L97.9 76.7L94.1 77.5ZM98.4 70.7L102.0 70.1L102.0 75.9L98.4 76.6ZM102.6 70.0L105.9 69.5L105.9 75.1L102.6 75.8ZM53.2 87.1L59.1 85.9L59.1 93.1L53.2 94.5ZM65.8 84.5L71.1 83.4L71.1 90.3L65.8 91.5ZM71.6 83.3L76.5 82.3L76.5 89.0L71.6 90.1ZM104.5 76.6L107.8 75.9L107.8 81.5L104.5 82.2ZM131.1 71.1L131.9 70.9L131.9 75.7L131.1 75.9ZM68.8 92.2L73.8 91.0L73.8 97.7L68.8 99.1ZM74.4 90.8L79.2 89.7L79.2 96.2L74.4 97.6ZM79.7 89.5L84.2 88.4L84.2 94.8L79.7 96.1ZM89.5 87.1L93.5 86.1L93.5 92.2L89.5 93.3ZM106.5 82.9L109.7 82.1L109.7 87.7L106.5 88.6ZM123.7 78.7L126.2 78.1L126.2 83.0L123.7 83.7ZM126.7 77.9L129.1 77.4L129.1 82.2L126.7 82.9ZM129.7 77.2L131.9 76.7L131.9 81.4L129.7 82.1ZM77.1 98.2L81.7 96.8L81.7 103.3L77.1 104.8ZM91.8 93.9L95.7 92.8L95.7 98.8L91.8 100.0ZM100.5 91.4L104.0 90.4L104.0 96.1L100.5 97.3ZM108.4 89.2L111.5 88.3L111.5 93.7L108.4 94.7ZM115.6 87.1L118.4 86.3L118.4 91.5L115.6 92.4ZM128.2 83.5L130.5 82.8L130.5 87.6L128.2 88.4ZM56.5 112.9L62.2 111.0L62.2 118.1L56.5 120.2ZM62.8 110.8L68.2 109.1L68.2 116.0L62.8 117.9ZM68.8 108.9L73.8 107.2L73.8 113.9L68.8 115.8ZM89.5 102.0L93.5 100.7L93.5 106.8L89.5 108.2ZM98.4 99.1L102.0 98.0L102.0 103.7L98.4 105.0ZM106.5 96.5L109.7 95.4L109.7 101.0L106.5 102.1ZM110.2 95.3L113.3 94.3L113.3 99.7L110.2 100.8ZM113.8 94.1L116.7 93.1L116.7 98.4L113.8 99.5ZM123.7 90.8L126.2 90.0L126.2 95.0L123.7 95.9ZM53.2 122.9L59.1 120.7L59.1 128.0L53.2 130.4ZM65.8 118.3L71.1 116.3L71.1 123.2L65.8 125.3ZM77.1 114.1L81.7 112.4L81.7 118.9L77.1 120.7ZM96.3 107.0L100.0 105.7L100.0 111.5L96.3 113.0ZM100.5 105.5L104.0 104.2L104.0 109.9L100.5 111.3ZM108.4 102.6L111.5 101.4L111.5 106.9L108.4 108.1ZM115.6 99.9L118.4 98.9L118.4 104.1L115.6 105.2ZM122.2 97.5L124.7 96.5L124.7 101.6L122.2 102.6ZM131.1 94.2L131.9 93.9L131.9 98.7L131.1 99.0ZM74.4 123.2L79.2 121.2L79.2 127.8L74.4 129.9ZM89.5 117.0L93.5 115.4L93.5 121.4L89.5 123.2ZM94.1 115.1L97.9 113.6L97.9 119.5L94.1 121.2ZM102.6 111.7L105.9 110.3L105.9 115.9L102.6 117.4ZM123.7 103.0L126.2 102.0L126.2 106.9L123.7 108.0ZM77.1 130.1L81.7 128.0L81.7 134.5L77.1 136.7ZM82.3 127.7L86.6 125.8L86.6 132.1L82.3 134.2ZM91.8 123.4L95.7 121.7L95.7 127.7L91.8 129.5ZM100.5 119.5L104.0 118.0L104.0 123.7L100.5 125.3ZM104.5 117.7L107.8 116.2L107.8 121.8L104.5 123.4ZM122.2 109.8L124.7 108.6L124.7 113.6L122.2 114.9ZM125.3 108.4L127.7 107.3L127.7 112.2L125.3 113.4ZM117.3 118.3L120.0 117.0L120.0 122.1L117.3 123.6ZM123.7 115.1L126.2 113.9L126.2 118.9L123.7 120.2ZM108.4 129.4L111.5 127.7L111.5 133.2L108.4 134.9ZM112.1 127.4L115.0 125.8L115.0 131.2L112.1 132.9ZM115.6 125.5L118.4 124.1L118.4 129.3L115.6 130.9ZM125.3 120.4L127.7 119.1L127.7 124.0L125.3 125.4ZM117.3 131.0L120.0 129.4L120.0 134.6L117.3 136.2Z" fill="#a08558"/><path d="M56.5 7.0L62.2 8.0L62.2 15.1L56.5 14.4ZM117.3 16.9L120.0 17.3L120.0 22.5L117.3 22.1ZM120.6 17.4L123.2 17.8L123.2 22.9L120.6 22.6ZM53.2 15.5L59.1 16.2L59.1 23.4L53.2 22.9ZM91.8 20.1L95.7 20.6L95.7 26.6L91.8 26.3ZM62.8 25.2L68.2 25.6L68.2 32.5L62.8 32.3ZM53.2 33.4L59.1 33.6L59.1 40.8L53.2 40.8ZM98.4 42.3L102.0 42.3L102.0 48.0L98.4 48.2ZM102.6 42.3L105.9 42.3L105.9 47.9L102.6 48.0ZM120.6 42.2L123.2 42.2L123.2 47.3L120.6 47.4ZM112.1 48.8L115.0 48.7L115.0 54.0L112.1 54.2ZM62.8 59.4L68.2 59.0L68.2 65.9L62.8 66.6ZM123.7 66.5L126.2 66.1L126.2 71.1L123.7 71.6ZM42.3 98.8L49.2 97.0L49.2 104.6L42.3 106.5ZM56.5 95.3L62.2 93.8L62.2 101.0L56.5 102.6ZM104.5 90.3L107.8 89.3L107.8 94.9L104.5 96.0ZM131.1 82.6L131.9 82.4L131.9 87.2L131.1 87.4ZM117.3 105.6L120.0 104.5L120.0 109.7L117.3 110.9ZM118.9 111.2L121.6 110.0L121.6 115.1L118.9 116.4ZM126.7 113.7L129.1 112.5L129.1 117.4L126.7 118.6ZM104.5 131.4L107.8 129.7L107.8 135.2L104.5 137.1ZM120.6 129.1L123.2 127.6L123.2 132.7L120.6 134.2Z" fill="#b39463"/><path d="M62.8 8.1L68.2 8.9L68.2 15.9L62.8 15.2ZM118.9 23.4L121.6 23.7L121.6 28.9L118.9 28.6ZM49.8 24.1L55.9 24.6L55.9 32.0L49.8 31.7ZM65.8 33.9L71.1 34.1L71.1 40.9L65.8 40.9ZM128.2 36.3L130.5 36.4L130.5 41.2L128.2 41.2ZM65.8 50.8L71.1 50.5L71.1 57.4L65.8 57.8ZM56.5 60.0L62.2 59.5L62.2 66.6L56.5 67.3ZM42.3 70.5L45.7 70.1L45.7 77.8L42.3 78.3ZM42.3 80.0L49.2 78.8L49.2 86.4L42.3 87.8ZM106.5 69.4L109.7 68.8L109.7 74.4L106.5 75.0ZM128.2 71.7L130.5 71.2L130.5 76.0L128.2 76.6ZM102.6 83.9L105.9 83.1L105.9 88.7L102.6 89.7ZM120.6 79.5L123.2 78.8L123.2 83.9L120.6 84.6ZM122.2 85.2L124.7 84.5L124.7 89.5L122.2 90.3ZM102.6 97.8L105.9 96.7L105.9 102.3L102.6 103.5ZM56.5 130.5L62.2 128.2L62.2 135.3L56.5 137.9ZM79.7 121.0L84.2 119.2L84.2 125.6L79.7 127.6ZM84.8 119.0L89.0 117.2L89.0 123.4L84.8 125.3ZM126.7 101.7L129.1 100.8L129.1 105.6L126.7 106.7ZM129.7 112.2L131.9 111.1L131.9 115.9L129.7 117.1ZM125.3 132.4L127.7 130.9L127.7 135.9L125.3 137.4Z" fill="#b89868"/><path d="M68.8 9.0L73.8 9.9L73.8 16.6L68.8 15.9ZM94.1 13.1L97.9 13.7L97.9 19.7L94.1 19.2ZM98.4 13.8L102.0 14.4L102.0 20.2L98.4 19.7ZM110.2 15.7L113.3 16.2L113.3 21.6L110.2 21.2ZM42.3 14.1L45.7 14.6L45.7 22.2L42.3 22.0ZM46.3 14.6L52.6 15.4L52.6 22.9L46.3 22.3ZM59.7 16.3L65.3 16.9L65.3 24.0L59.7 23.5ZM71.6 17.7L76.5 18.3L76.5 24.9L71.6 24.5ZM108.4 22.1L111.5 22.5L111.5 28.0L108.4 27.7ZM128.2 24.5L130.5 24.8L130.5 29.6L128.2 29.4ZM131.1 24.9L131.9 25.0L131.9 29.8L131.1 29.7ZM79.7 26.5L84.2 26.9L84.2 33.3L79.7 33.1ZM113.8 29.3L116.7 29.5L116.7 34.8L113.8 34.7ZM59.7 33.6L65.3 33.9L65.3 40.9L59.7 40.8ZM82.3 34.5L86.6 34.7L86.6 41.0L82.3 41.0ZM100.5 35.2L104.0 35.4L104.0 41.1L100.5 41.1ZM108.4 35.5L111.5 35.7L111.5 41.1L108.4 41.1ZM56.5 42.3L62.2 42.3L62.2 49.4L56.5 49.6ZM74.4 42.3L79.2 42.3L79.2 48.8L74.4 49.0ZM77.1 50.3L81.7 50.1L81.7 56.5L77.1 56.9ZM87.2 49.8L91.3 49.7L91.3 55.8L87.2 56.1ZM104.5 49.1L107.8 49.0L107.8 54.6L104.5 54.8ZM122.2 48.4L124.7 48.3L124.7 53.3L122.2 53.5ZM125.3 48.2L127.7 48.1L127.7 53.0L125.3 53.2ZM68.8 58.9L73.8 58.5L73.8 65.3L68.8 65.9ZM106.5 55.8L109.7 55.5L109.7 61.1L106.5 61.4ZM110.2 55.5L113.3 55.2L113.3 60.6L110.2 61.0ZM117.3 54.9L120.0 54.7L120.0 59.9L117.3 60.2ZM120.6 54.6L123.2 54.4L123.2 59.5L120.6 59.8ZM59.7 68.4L65.3 67.7L65.3 74.7L59.7 75.6ZM113.8 68.2L116.7 67.7L116.7 73.0L113.8 73.5ZM46.3 88.5L52.6 87.2L52.6 94.7L46.3 96.2ZM115.6 74.3L118.4 73.7L118.4 78.9L115.6 79.6ZM118.9 73.6L121.6 73.0L121.6 78.2L118.9 78.8ZM122.2 72.9L124.7 72.4L124.7 77.4L122.2 78.0ZM84.8 88.3L89.0 87.2L89.0 93.5L84.8 94.6ZM94.1 86.0L97.9 85.1L97.9 91.0L94.1 92.0ZM110.2 82.0L113.3 81.3L113.3 86.6L110.2 87.5ZM113.8 81.1L116.7 80.4L116.7 85.7L113.8 86.5ZM53.2 105.0L59.1 103.3L59.1 110.5L53.2 112.5ZM87.2 95.3L91.3 94.1L91.3 100.2L87.2 101.5ZM112.1 88.1L115.0 87.3L115.0 92.6L112.1 93.5ZM125.3 84.3L127.7 83.6L127.7 88.5L125.3 89.3ZM42.3 117.6L49.2 115.3L49.2 122.8L42.3 125.3ZM49.8 115.1L55.9 113.1L55.9 120.4L49.8 122.6ZM79.7 105.3L84.2 103.8L84.2 110.2L79.7 111.8ZM94.1 100.6L97.9 99.3L97.9 105.2L94.1 106.6ZM126.7 89.8L129.1 89.1L129.1 93.9L126.7 94.8ZM59.7 120.5L65.3 118.5L65.3 125.5L59.7 127.7ZM71.6 116.1L76.5 114.3L76.5 121.0L71.6 122.9ZM96.3 121.4L100.0 119.8L100.0 125.6L96.3 127.4ZM115.6 112.7L118.4 111.5L118.4 116.7L115.6 118.1ZM128.2 107.0L130.5 106.0L130.5 110.8L128.2 111.9ZM113.8 120.0L116.7 118.6L116.7 123.9L113.8 125.4ZM118.9 123.8L121.6 122.3L121.6 127.5L118.9 129.0ZM113.8 133.0L116.7 131.3L116.7 136.6L113.8 138.3ZM129.7 123.9L131.9 122.6L131.9 127.4L129.7 128.7Z" fill="#c3a474"/><path d="M74.4 9.9L79.2 10.7L79.2 17.3L74.4 16.7ZM84.8 11.6L89.0 12.3L89.0 18.5L84.8 18.0ZM113.8 16.3L116.7 16.8L116.7 22.1L113.8 21.7ZM123.7 17.9L126.2 18.3L126.2 23.3L123.7 23.0ZM129.7 18.9L131.9 19.2L131.9 24.0L129.7 23.7ZM104.5 21.7L107.8 22.1L107.8 27.7L104.5 27.4ZM125.3 24.2L127.7 24.5L127.7 29.4L125.3 29.2ZM110.2 29.0L113.3 29.2L113.3 34.6L110.2 34.5ZM71.6 34.1L76.5 34.3L76.5 40.9L71.6 40.9ZM115.6 35.8L118.4 35.9L118.4 41.2L115.6 41.1ZM118.9 36.0L121.6 36.1L121.6 41.2L118.9 41.2ZM131.1 36.4L131.9 36.5L131.9 41.2L131.1 41.2ZM62.8 42.3L68.2 42.3L68.2 49.2L62.8 49.4ZM110.2 42.2L113.3 42.2L113.3 47.6L110.2 47.7ZM42.3 51.8L45.7 51.6L45.7 59.3L42.3 59.6ZM42.3 61.2L49.2 60.6L49.2 68.1L42.3 68.9ZM79.7 58.0L84.2 57.7L84.2 64.0L79.7 64.6ZM98.4 56.5L102.0 56.2L102.0 62.0L98.4 62.4ZM113.8 55.2L116.7 55.0L116.7 60.2L113.8 60.6ZM129.7 53.9L131.9 53.7L131.9 58.5L129.7 58.7ZM77.1 66.2L81.7 65.7L81.7 72.1L77.1 72.9ZM82.3 65.6L86.6 65.1L86.6 71.4L82.3 72.0ZM108.4 62.4L111.5 62.0L111.5 67.4L108.4 67.9ZM115.6 61.5L118.4 61.1L118.4 66.3L115.6 66.8ZM49.8 78.7L55.9 77.7L55.9 85.0L49.8 86.3ZM77.1 82.2L81.7 81.2L81.7 87.7L77.1 88.8ZM87.2 80.1L91.3 79.3L91.3 85.4L87.2 86.4ZM62.8 93.7L68.2 92.4L68.2 99.3L62.8 100.8ZM84.8 103.6L89.0 102.2L89.0 108.4L84.8 110.0ZM120.6 91.9L123.2 91.0L123.2 96.1L120.6 97.0ZM42.3 127.0L45.7 125.7L45.7 133.4L42.3 134.8ZM68.8 125.5L73.8 123.4L73.8 130.2L68.8 132.4ZM113.8 107.0L116.7 105.9L116.7 111.1L113.8 112.4ZM87.2 125.5L91.3 123.7L91.3 129.8L87.2 131.8ZM84.8 134.3L89.0 132.2L89.0 138.4L84.8 140.7ZM89.5 131.9L93.5 130.0L93.5 136.0L89.5 138.1ZM98.4 127.6L102.0 125.8L102.0 131.6L98.4 133.5ZM102.6 125.5L105.9 123.9L105.9 129.5L102.6 131.3ZM128.2 118.8L130.5 117.6L130.5 122.4L128.2 123.7ZM123.7 127.3L126.2 125.9L126.2 130.8L123.7 132.3ZM128.2 130.6L130.5 129.2L130.5 134.0L128.2 135.5Z" fill="#bd9e6e"/><path d="M106.5 15.1L109.7 15.7L109.7 21.2L106.5 20.8ZM126.7 18.4L129.1 18.8L129.1 23.7L126.7 23.4ZM65.8 17.0L71.1 17.6L71.1 24.5L65.8 24.0ZM98.4 28.0L102.0 28.3L102.0 34.1L98.4 33.9ZM106.5 28.7L109.7 29.0L109.7 34.5L106.5 34.3ZM79.7 42.3L84.2 42.3L84.2 48.7L79.7 48.8ZM94.1 42.3L97.9 42.3L97.9 48.2L94.1 48.3ZM59.7 51.0L65.3 50.8L65.3 57.8L59.7 58.2ZM71.6 50.5L76.5 50.3L76.5 56.9L71.6 57.3ZM74.4 58.5L79.2 58.1L79.2 64.6L74.4 65.2ZM84.8 57.6L89.0 57.3L89.0 63.5L84.8 64.0ZM84.8 73.0L89.0 72.3L89.0 78.5L84.8 79.3ZM110.2 68.8L113.3 68.2L113.3 73.6L110.2 74.2ZM117.3 67.6L120.0 67.1L120.0 72.3L117.3 72.9ZM120.6 67.1L123.2 66.6L123.2 71.7L120.6 72.2ZM126.7 66.0L129.1 65.6L129.1 70.5L126.7 71.0ZM129.7 65.6L131.9 65.2L131.9 69.9L129.7 70.4ZM42.3 89.4L45.7 88.6L45.7 96.3L42.3 97.1ZM82.3 81.1L86.6 80.2L86.6 86.5L82.3 87.6ZM91.8 79.2L95.7 78.4L95.7 84.4L91.8 85.3ZM100.5 77.4L104.0 76.7L104.0 82.4L100.5 83.2ZM108.4 75.8L111.5 75.1L111.5 80.6L108.4 81.3ZM42.3 108.2L45.7 107.2L45.7 114.9L42.3 116.0ZM46.3 107.0L52.6 105.2L52.6 112.6L46.3 114.7ZM65.8 101.4L71.1 99.9L71.1 106.7L65.8 108.4ZM82.3 96.7L86.6 95.4L86.6 101.7L82.3 103.1ZM129.7 88.9L131.9 88.2L131.9 92.9L129.7 93.7ZM82.3 112.2L86.6 110.6L86.6 116.9L82.3 118.7ZM112.1 101.2L115.0 100.1L115.0 105.5L112.1 106.6ZM125.3 96.3L127.7 95.5L127.7 100.4L125.3 101.3ZM49.8 133.3L55.9 130.8L55.9 138.1L49.8 140.8ZM110.2 108.5L113.3 107.3L113.3 112.7L110.2 114.0ZM129.7 100.6L131.9 99.6L131.9 104.4L129.7 105.4ZM71.6 132.5L76.5 130.3L76.5 137.0L71.6 139.4ZM94.1 129.7L97.9 127.8L97.9 133.8L94.1 135.7Z" fill="#a88b5c"/><path d="M36.6 5.4L42.3 4.8L42.3 12.6L36.6 13.1ZM22.5 15.9L27.4 15.5L27.4 22.9L22.5 23.2ZM14.7 25.2L19.3 24.9L19.3 32.1L14.7 32.3ZM30.8 42.3L36.0 42.3L36.0 50.0L30.8 49.9ZM39.5 51.7L42.3 51.8L42.3 59.6L39.5 59.4ZM17.3 51.0L21.9 51.1L21.9 58.4L17.3 58.1ZM28.0 69.2L33.0 69.7L33.0 77.3L28.0 76.7ZM12.2 67.8L16.7 68.2L16.7 75.4L12.2 74.9ZM2.6 66.9L6.7 67.3L6.7 74.2L2.6 73.7ZM36.6 79.3L42.3 80.0L42.3 87.8L36.6 86.9ZM36.6 97.7L42.3 98.8L42.3 106.5L36.6 105.4ZM9.7 92.8L14.1 93.6L14.1 100.7L9.7 99.8ZM39.5 107.6L42.3 108.2L42.3 116.0L39.5 115.3ZM28.0 105.1L33.0 106.2L33.0 113.8L28.0 112.6ZM17.3 102.9L21.9 103.8L21.9 111.1L17.3 110.0ZM12.2 101.8L16.7 102.7L16.7 109.9L12.2 108.8ZM14.7 110.9L19.3 112.0L19.3 119.2L14.7 118.0ZM4.9 108.5L9.1 109.5L9.1 116.5L4.9 115.4ZM14.7 128.0L19.3 129.4L19.3 136.6L14.7 135.2ZM0.2 131.8L2.0 132.4L2.0 139.2L0.2 138.6Z" fill="#6e6248"/><path d="M30.8 6.1L36.0 5.5L36.0 13.1L30.8 13.6ZM25.2 6.8L30.2 6.2L30.2 13.7L25.2 14.2ZM14.7 8.0L19.3 7.5L19.3 14.7L14.7 15.1ZM0.2 9.7L4.3 9.3L4.3 16.1L0.2 16.5ZM28.0 15.4L33.0 15.0L33.0 22.5L28.0 22.9ZM17.3 16.4L21.9 16.0L21.9 23.3L17.3 23.6ZM7.3 17.3L11.6 16.9L11.6 23.9L7.3 24.2ZM25.2 24.6L30.2 24.3L30.2 31.8L25.2 31.9ZM19.9 24.9L24.6 24.6L24.6 32.0L19.9 32.1ZM9.7 25.5L14.1 25.2L14.1 32.3L9.7 32.5ZM39.5 33.0L42.3 33.0L42.3 40.8L39.5 40.8ZM12.2 33.8L16.7 33.7L16.7 40.9L12.2 40.9ZM2.6 34.1L6.7 34.0L6.7 40.9L2.6 40.9ZM36.6 42.3L42.3 42.4L42.3 50.1L36.6 50.0ZM19.9 42.3L24.6 42.3L24.6 49.7L19.9 49.6ZM9.7 42.3L14.1 42.3L14.1 49.4L9.7 49.3ZM28.0 51.3L33.0 51.5L33.0 59.0L28.0 58.7ZM12.2 50.8L16.7 51.0L16.7 58.1L12.2 57.9ZM7.3 50.7L11.6 50.8L11.6 57.8L7.3 57.6ZM2.6 50.5L6.7 50.6L6.7 57.6L2.6 57.3ZM0.2 50.4L2.0 50.5L2.0 57.3L0.2 57.2ZM25.2 60.1L30.2 60.4L30.2 67.9L25.2 67.5ZM19.9 59.8L24.6 60.1L24.6 67.4L19.9 67.0ZM4.9 58.9L9.1 59.1L9.1 66.1L4.9 65.7ZM39.5 70.3L42.3 70.5L42.3 78.3L39.5 78.0ZM7.3 67.4L11.6 67.8L11.6 74.8L7.3 74.3ZM19.9 77.2L24.6 77.8L24.6 85.2L19.9 84.5ZM14.7 76.6L19.3 77.2L19.3 84.4L14.7 83.7ZM39.5 88.9L42.3 89.4L42.3 97.1L39.5 96.7ZM33.6 88.0L38.9 88.8L38.9 96.6L33.6 95.6ZM28.0 87.2L33.0 88.0L33.0 95.5L28.0 94.6ZM7.3 84.1L11.6 84.7L11.6 91.7L7.3 91.0ZM0.2 83.0L2.0 83.3L2.0 90.0L0.2 89.7ZM25.2 95.7L30.2 96.6L30.2 104.1L25.2 103.0ZM19.9 94.7L24.6 95.5L24.6 102.9L19.9 101.9ZM14.7 93.8L19.3 94.6L19.3 101.8L14.7 100.9ZM0.2 91.1L4.3 91.9L4.3 98.7L0.2 97.9ZM7.3 100.8L11.6 101.7L11.6 108.7L7.3 107.7ZM25.2 113.4L30.2 114.6L30.2 122.1L25.2 120.8ZM19.9 112.1L24.6 113.3L24.6 120.6L19.9 119.4ZM0.2 107.4L4.3 108.4L4.3 115.2L0.2 114.2ZM39.5 126.2L42.3 127.0L42.3 134.8L39.5 133.9ZM33.6 124.6L38.9 126.0L38.9 133.8L33.6 132.2ZM28.0 123.1L33.0 124.4L33.0 132.0L28.0 130.5ZM12.2 118.8L16.7 120.0L16.7 127.2L12.2 125.8ZM2.6 116.2L6.7 117.3L6.7 124.2L2.6 123.0ZM0.2 115.5L2.0 116.0L2.0 122.8L0.2 122.3ZM19.9 129.6L24.6 131.0L24.6 138.4L19.9 136.8ZM9.7 126.5L14.1 127.9L14.1 135.0L9.7 133.5ZM0.2 123.7L4.3 124.9L4.3 131.8L0.2 130.4Z" fill="#6a5f47"/><path d="M19.9 7.4L24.6 6.9L24.6 14.2L19.9 14.7ZM4.9 9.2L9.1 8.7L9.1 15.7L4.9 16.1ZM12.2 16.8L16.7 16.4L16.7 23.6L12.2 23.9ZM2.6 17.7L6.7 17.3L6.7 24.2L2.6 24.5ZM30.8 24.2L36.0 23.9L36.0 31.6L30.8 31.7ZM28.0 33.4L33.0 33.2L33.0 40.8L28.0 40.8ZM33.6 51.5L38.9 51.6L38.9 59.4L33.6 59.1ZM30.8 60.4L36.0 60.8L36.0 68.4L30.8 68.0ZM9.7 59.2L14.1 59.4L14.1 66.5L9.7 66.1Z" fill="#5a513c"/><path d="M9.7 8.6L14.1 8.1L14.1 15.2L9.7 15.6ZM39.5 14.4L42.3 14.1L42.3 22.0L39.5 22.1ZM0.2 17.9L2.0 17.7L2.0 24.5L0.2 24.6ZM4.9 42.3L9.1 42.3L9.1 49.3L4.9 49.2ZM14.7 59.5L19.3 59.7L19.3 67.0L14.7 66.6ZM33.6 69.8L38.9 70.2L38.9 78.0L33.6 77.3ZM22.5 86.4L27.4 87.1L27.4 94.5L22.5 93.7ZM36.6 116.2L42.3 117.6L42.3 125.3L36.6 123.8ZM7.3 117.5L11.6 118.6L11.6 125.7L7.3 124.4Z" fill="#645a43"/><path d="M87.2 19.6L91.3 20.1L91.3 26.2L87.2 25.9ZM112.1 22.6L115.0 22.9L115.0 28.3L112.1 28.0ZM94.1 27.7L97.9 28.0L97.9 33.9L94.1 33.7ZM117.3 29.6L120.0 29.8L120.0 34.9L117.3 34.8ZM122.2 36.1L124.7 36.2L124.7 41.2L122.2 41.2ZM84.8 42.3L89.0 42.3L89.0 48.5L84.8 48.6ZM126.7 42.2L129.1 42.2L129.1 47.1L126.7 47.2ZM96.3 49.5L100.0 49.3L100.0 55.2L96.3 55.4ZM100.5 49.3L104.0 49.1L104.0 54.8L100.5 55.1ZM46.3 70.1L52.6 69.3L52.6 76.7L46.3 77.7ZM104.5 62.8L107.8 62.4L107.8 68.0L104.5 68.5ZM122.2 60.6L124.7 60.3L124.7 65.3L122.2 65.7ZM56.5 77.6L62.2 76.7L62.2 83.8L56.5 84.9ZM59.7 103.2L65.3 101.6L65.3 108.6L59.7 110.4ZM71.6 99.7L76.5 98.3L76.5 105.0L71.6 106.5ZM96.3 92.6L100.0 91.6L100.0 97.4L96.3 98.6ZM87.2 110.4L91.3 108.9L91.3 115.0L87.2 116.7ZM118.9 98.7L121.6 97.7L121.6 102.8L118.9 103.9ZM62.8 128.0L68.2 125.7L68.2 132.7L62.8 135.1ZM98.4 113.4L102.0 111.9L102.0 117.7L98.4 119.3ZM131.1 105.8L131.9 105.4L131.9 110.1L131.1 110.5ZM106.5 123.6L109.7 122.0L109.7 127.5L106.5 129.2ZM110.2 121.8L113.3 120.3L113.3 125.7L110.2 127.3ZM120.6 116.7L123.2 115.4L123.2 120.5L120.6 121.8ZM100.5 133.6L104.0 131.7L104.0 137.4L100.5 139.4ZM131.1 117.3L131.9 116.9L131.9 121.6L131.1 122.1ZM126.7 125.6L129.1 124.2L129.1 129.1L126.7 130.5ZM131.1 128.9L131.9 128.3L131.9 133.1L131.1 133.7Z" fill="#c9aa78"/><path d="M33.6 14.9L38.9 14.5L38.9 22.2L33.6 22.5ZM0.2 26.0L4.3 25.8L4.3 32.6L0.2 32.8ZM7.3 34.0L11.6 33.8L11.6 40.9L7.3 40.9ZM14.7 42.3L19.3 42.3L19.3 49.6L14.7 49.4ZM36.6 60.8L42.3 61.2L42.3 68.9L36.6 68.5ZM22.5 68.7L27.4 69.2L27.4 76.6L22.5 76.1ZM25.2 77.9L30.2 78.5L30.2 86.0L25.2 85.3ZM2.6 83.3L6.7 84.0L6.7 90.9L2.6 90.2ZM17.3 120.2L21.9 121.4L21.9 128.7L17.3 127.3ZM4.9 125.1L9.1 126.4L9.1 133.3L4.9 132.0Z" fill="#74674b"/><path d="M42.3 23.6L49.2 24.1L49.2 31.7L42.3 31.4ZM74.4 26.1L79.2 26.5L79.2 33.1L74.4 32.8ZM84.8 27.0L89.0 27.3L89.0 33.5L84.8 33.3ZM123.7 30.1L126.2 30.3L126.2 35.2L123.7 35.1ZM129.7 30.5L131.9 30.7L131.9 35.5L129.7 35.4ZM46.3 33.1L52.6 33.4L52.6 40.8L46.3 40.8ZM104.5 35.4L107.8 35.5L107.8 41.1L104.5 41.1ZM112.1 35.7L115.0 35.8L115.0 41.1L112.1 41.1ZM125.3 36.2L127.7 36.3L127.7 41.2L125.3 41.2ZM68.8 42.3L73.8 42.3L73.8 49.0L68.8 49.2ZM106.5 42.3L109.7 42.2L109.7 47.8L106.5 47.9ZM117.3 42.2L120.0 42.2L120.0 47.4L117.3 47.5ZM82.3 50.1L86.6 49.9L86.6 56.2L82.3 56.5ZM49.8 60.5L55.9 60.0L55.9 67.4L49.8 68.1ZM89.5 57.2L93.5 56.9L93.5 63.0L89.5 63.4ZM71.6 66.9L76.5 66.3L76.5 72.9L71.6 73.7ZM87.2 65.0L91.3 64.5L91.3 70.6L87.2 71.3ZM91.8 64.4L95.7 63.9L95.7 69.9L91.8 70.5ZM96.3 63.9L100.0 63.4L100.0 69.2L96.3 69.8ZM100.5 63.3L104.0 62.9L104.0 68.6L100.5 69.2ZM125.3 60.3L127.7 60.0L127.7 64.9L125.3 65.3ZM59.7 85.8L65.3 84.6L65.3 91.6L59.7 93.0ZM96.3 78.2L100.0 77.5L100.0 83.3L96.3 84.2ZM112.1 75.0L115.0 74.4L115.0 79.7L112.1 80.4ZM125.3 72.3L127.7 71.8L127.7 76.7L125.3 77.3ZM49.8 96.9L55.9 95.4L55.9 102.7L49.8 104.5ZM98.4 84.9L102.0 84.0L102.0 89.8L98.4 90.8ZM117.3 80.3L120.0 79.6L120.0 84.8L117.3 85.5ZM118.9 86.1L121.6 85.4L121.6 90.5L118.9 91.3ZM74.4 107.0L79.2 105.5L79.2 112.0L74.4 113.7ZM117.3 92.9L120.0 92.0L120.0 97.2L117.3 98.2ZM46.3 125.5L52.6 123.1L52.6 130.6L46.3 133.1ZM91.8 108.7L95.7 107.2L95.7 113.2L91.8 114.8ZM104.5 104.0L107.8 102.8L107.8 108.3L104.5 109.7ZM128.2 95.3L130.5 94.4L130.5 99.2L128.2 100.1ZM106.5 110.0L109.7 108.7L109.7 114.3L106.5 115.7ZM120.6 104.3L123.2 103.2L123.2 108.3L120.6 109.4ZM108.4 116.0L111.5 114.6L111.5 120.0L108.4 121.5ZM112.1 114.3L115.0 113.0L115.0 118.3L112.1 119.8ZM122.2 122.0L124.7 120.7L124.7 125.7L122.2 127.1Z" fill="#8f774e"/><path d="M36.6 23.9L42.3 23.6L42.3 31.4L36.6 31.5ZM33.6 33.2L38.9 33.0L38.9 40.8L33.6 40.8ZM17.3 33.7L21.9 33.5L21.9 40.8L17.3 40.8ZM25.2 42.3L30.2 42.3L30.2 49.8L25.2 49.7ZM0.2 66.7L2.0 66.9L2.0 73.7L0.2 73.5ZM9.7 76.0L14.1 76.5L14.1 83.6L9.7 83.0ZM0.2 74.9L4.3 75.3L4.3 82.2L0.2 81.6ZM30.8 114.8L36.0 116.0L36.0 123.7L30.8 122.3Z" fill="#5e553f"/><path d="M4.9 25.8L9.1 25.5L9.1 32.5L4.9 32.6ZM0.2 42.3L4.3 42.3L4.3 49.2L0.2 49.1ZM0.2 58.6L4.3 58.8L4.3 65.7L0.2 65.3ZM17.3 68.3L21.9 68.7L21.9 76.0L17.3 75.4ZM12.2 84.8L16.7 85.5L16.7 92.6L12.2 91.8ZM30.8 96.7L36.0 97.6L36.0 105.2L30.8 104.2ZM4.9 92.0L9.1 92.7L9.1 99.7L4.9 98.8ZM33.6 106.3L38.9 107.4L38.9 115.2L33.6 113.9ZM22.5 104.0L27.4 105.0L27.4 112.4L22.5 111.3ZM0.2 99.3L2.0 99.6L2.0 106.4L0.2 106.0ZM25.2 131.2L30.2 132.7L30.2 140.2L25.2 138.6Z" fill="#706449"/><path d="M22.5 33.5L27.4 33.4L27.4 40.8L22.5 40.8ZM0.2 34.2L2.0 34.1L2.0 40.9L0.2 40.9ZM22.5 51.1L27.4 51.3L27.4 58.7L22.5 58.4ZM30.8 78.6L36.0 79.2L36.0 86.8L30.8 86.1ZM4.9 75.4L9.1 75.9L9.1 82.9L4.9 82.3ZM17.3 85.6L21.9 86.3L21.9 93.6L17.3 92.7ZM2.6 99.8L6.7 100.6L6.7 107.5L2.6 106.6ZM9.7 109.7L14.1 110.8L14.1 117.8L9.7 116.7ZM22.5 121.6L27.4 122.9L27.4 130.3L22.5 128.9Z" fill="#665c45"/><path d="M0.00 8.78L3.52 8.35L7.05 7.92L10.57 7.49L14.10 7.06L17.62 6.62L21.15 6.19L24.67 5.76L28.20 5.33L31.72 4.90L35.25 4.46L38.77 4.03L42.30 3.60L42.30 134.30L0.00 134.30Z" fill="url(#wdl)"/><path d="M42.30 3.60L49.78 4.85L57.27 6.10L64.75 7.34L72.23 8.59L79.72 9.84L87.20 11.09L94.68 12.34L102.17 13.58L109.65 14.83L117.13 16.08L124.62 17.33L132.10 18.58L132.10 134.30L42.30 134.30Z" fill="url(#wdr)" opacity=".85"/><path d="M41.70 4.1V132.3" stroke="#2a261e" stroke-width="1.2" opacity=".55"/></g></svg></div>
<svg style="left:250.30px;top:92.70px;" width="9.4" height="7.8" viewBox="0 0 9.4 7.8" fill="none"><path d="M0.3 3.9L2.6 3.0V4.8Z" fill="#e4e4e4"/><ellipse cx="4.5" cy="3.9" rx="1.7" ry="3.1" stroke="#b5c9d8" stroke-width="0.8" fill="#5a5a5a"/><path d="M6 1.6H7.6C8.3 1.6 8.7 2.6 8.7 3.9C8.7 5.2 8.3 6.2 7.6 6.2H6" stroke="#e0e0e0" stroke-width="0.8"/><rect x="7.7" y="2.4" width="1.1" height="3" fill="#f0f0f0"/></svg>
<svg style="left:425.30px;top:92.90px;" width="7" height="7.4" viewBox="0 0 7 7.4" fill="none"><rect x="0.8" y="0.8" width="5.4" height="5.8" rx="1.1" stroke="#dedede" stroke-width="0.9"/><rect x="1.7" y="1.8" width="3.6" height="3.8" fill="#3a3a3a"/></svg>
<svg style="left:438.20px;top:92.80px;" width="9" height="7.4" viewBox="0 0 9 7.4" fill="none"><path d="M3.6 1.5H5.2" stroke="#9a9a9a" stroke-width="0.9"/><path d="M2.3 2.6C3.4 2.1 5.6 2.1 6.7 2.6C7.4 3.6 7 5.6 6 6.4H3C2 5.6 1.6 3.6 2.3 2.6Z" stroke="#b8b8b8" stroke-width="0.8"/><path d="M2 4.4C1.2 4.2 0.7 3.4 0.5 2.7M7 3.2C8.2 2.6 8.6 3.8 7.8 4.6C7.5 4.9 7.1 5.2 6.8 5.3" stroke="#b8b8b8" stroke-width="0.75" stroke-linecap="round"/></svg>
<span class="t" style="left:452px;top:91px;color:#e8e8e8;font-size:7.4px;font-weight:700;transform:perspective(1000px) translate3d(0,0.10px,0.1px) rotateX(0.5deg) scaleX(0.95);"><i style="position:relative;top:-0.9px;font-style:normal">1</i>/<i style="position:relative;top:0.9px;font-style:normal">1</i></span>
<svg style="left:459.60px;top:99.40px;" width="3.8" height="3.8" viewBox="0 0 3.8 3.8" fill="none"><path d="M3.6 0.2V3.6H0.2Z" fill="#eeeeee"/></svg>
<svg style="left:469.35px;top:91.85px;" width="2.7" height="9.1" viewBox="0 0 2.7 9.10" fill="none"><rect x="0.5" y="0.50" width="1.7" height="1.7" fill="#e2ecf4"/><rect x="0.5" y="3.70" width="1.7" height="1.7" fill="#e2ecf4"/><rect x="0.5" y="6.90" width="1.7" height="1.7" fill="#e2ecf4"/></svg>
<div style="left:247.00px;top:236.80px;width:232.20px;height:3.20px;background:#6a6c6a;"></div>
<div style="left:247.00px;top:240.20px;width:233.70px;height:267.50px;background:#2e2e2e;"></div>
<svg style="left:247.00px;top:240.20px" width="232.20" height="267.50"><rect width="100%" height="100%" fill="url(#dp)"/></svg>
<span class="t" style="left:249px;top:242px;color:#e0e0e0;transform:perspective(1000px) translate3d(0,0.10px,0.1px) rotateX(0.5deg) scaleX(0.947);">Generic</span>
<svg style="left:428.00px;top:243.20px;" width="9.2" height="8.8" viewBox="0 0 9.2 8.8" fill="none"><path d="M1.6 1.3H6.4" stroke="#686868" stroke-width="0.7"/><circle cx="2.4" cy="1.3" r="0.8" fill="#7a7a7a"/><path d="M0.4 4.4H8.8" stroke="#e4e4e4" stroke-width="0.9"/><circle cx="5.9" cy="4.4" r="1.35" fill="#eef2f6"/><path d="M1.6 7.5H6.4" stroke="#686868" stroke-width="0.7"/><circle cx="2.4" cy="7.5" r="0.8" fill="#7a7a7a"/></svg>
<div style="left:442.40px;top:243.00px;width:0.80px;height:10.00px;background:#555;"></div>
<svg style="left:448.70px;top:243.20px;" width="9.2" height="9.2" viewBox="0 0 9.2 9.2" fill="none"><path d="M4.6 0.2V4.6M2.4 2.4H6.8" stroke="#e6edf3" stroke-width="0.95"/><rect x="0.3" y="5.2" width="8.6" height="1.4" fill="#9c9c9c"/><rect x="0.3" y="7.5" width="8.6" height="1.3" fill="#dfe9f1"/></svg>
<svg style="left:464.00px;top:243.10px;" width="9.6" height="9.2" viewBox="0 0 9.6 9.2" fill="none"><path d="M4.8 0.4V4.8" stroke="#a8a8a8" stroke-width="1.2"/><path d="M3 1.9H6.6" stroke="#c8d6e2" stroke-width="0.9"/><path d="M0.6 3.4C1 5.4 2 6.2 3.4 6.4H8.6V5" stroke="#e4ecf2" stroke-width="0.95" stroke-linejoin="round"/><path d="M1 6.6L2.6 8.4H8.8V6.6" stroke="#dfe9f1" stroke-width="0.9" stroke-linejoin="round"/></svg>
<div style="left:249.00px;top:255.20px;width:227.30px;height:15.90px;background:#464543;"></div><svg style="left:250.90px;top:261.25px;" width="5.4" height="4" viewBox="0 0 5.4 4" fill="none"><path d="M0.3 0.6L5.1 0.6L2.7 3.4Z" fill="#e0e0e0"/></svg><div style="left:259.20px;top:261.55px;width:9.40px;height:2.60px;background:#9a9a9a;"></div><span class="t" style="left:272px;top:257px;color:#e4e4e4;font-weight:700;transform:perspective(1000px) translate3d(0,0.25px,0.1px) rotateX(0.5deg) scaleX(0.868);">VRayBRDF</span><div style="left:349px;top:261.75px;width:28px;height:2.2px;border-top:0.7px solid #8a8a8a;border-bottom:0.7px solid #777;box-sizing:border-box;opacity:.8"></div><svg style="left:467.90px;top:258.85px;" width="2.6" height="8.6" viewBox="0 0 2.6 8.60" fill="none"><rect x="0.5" y="0.50" width="1.6" height="1.6" fill="#e2ecf4"/><rect x="0.5" y="3.50" width="1.6" height="1.6" fill="#e2ecf4"/><rect x="0.5" y="6.50" width="1.6" height="1.6" fill="#e2ecf4"/></svg>
<div style="left:249.00px;top:272.80px;width:227.30px;height:1.00px;background:#464646;"></div>
<svg style="left:250.90px;top:279.10px;" width="5.4" height="4" viewBox="0 0 5.4 4" fill="none"><path d="M0.3 0.6L5.1 0.6L2.7 3.4Z" fill="#e0e0e0"/></svg><span class="t" style="left:259px;top:275px;color:#e4e4e4;font-weight:700;transform:perspective(1000px) translate3d(0,0.50px,0.1px) rotateX(0.5deg) scaleX(0.93);">Diffuse</span>
<span class="t" style="left:255px;top:291px;color:#6e6e6e;transform:perspective(1000px) translate3d(0,0.00px,0.1px) rotateX(0.5deg);">Diffuse</span>
<div style="left:327.20px;top:291.80px;width:27.90px;height:9.50px;background:#878787;"></div>
<div style="left:360.40px;top:296.15px;width:80.30px;height:1.10px;background:#161616;"></div><div style="left:360.40px;top:296.05px;width:19.40px;height:1.30px;background:#dcdcdc;border-radius:1px;"></div><div style="left:378.20px;top:295.10px;width:3.2px;height:3.2px;border-radius:50%;background:#f6f6f6;box-shadow:0 0 0 1px #1e1e1e;"></div>
<svg style="left:449.00px;top:291.30px;" width="10.2" height="10.2" viewBox="0 0 10.2 10.2" fill="none"><rect x="0" y="0" width="10.2" height="10.2" fill="#4e4e4e"/><rect x="0" y="0" width="5.1" height="5.1" fill="#a9c7de"/><rect x="5.1" y="5.1" width="5.1" height="5.1" fill="#a9c7de"/><rect x="0.3" y="0.3" width="9.6" height="9.6" stroke="#bcd3e4" stroke-width="0.6" fill="none"/></svg>
<svg style="left:465.80px;top:293.20px;" width="7" height="7" viewBox="0 0 7 7" fill="none"><rect x="0" y="0" width="7" height="7" fill="#7d7d7d"/><path d="M1.3 3.6L2.9 5.4L5.9 1.2" stroke="#ffffff" stroke-width="1.15" fill="none"/></svg>
<div style="left:249.00px;top:305.90px;width:227.30px;height:1.00px;background:#3c3c3c;"></div>
<svg style="left:250.90px;top:313.70px;" width="5.4" height="4" viewBox="0 0 5.4 4" fill="none"><path d="M0.3 0.6L5.1 0.6L2.7 3.4Z" fill="#e0e0e0"/></svg><span class="t" style="left:259px;top:310px;color:#e4e4e4;font-weight:700;transform:perspective(1000px) translate3d(0,0.10px,0.1px) rotateX(0.5deg) scaleX(0.93);">Reflection</span><div style="left:455.80px;top:312.90px;width:13px;height:5.4px;border-radius:2.7px;background:#a3bfd6;"></div><div style="left:464.60px;top:311.30px;width:8.6px;height:8.6px;border-radius:50%;background:#e9ebec;box-shadow:0 0.6px 1.2px rgba(0,0,0,.6);"></div>
<span class="t" style="left:255px;top:324px;color:#a8a8a8;transform:perspective(1000px) translate3d(0,0.90px,0.1px) rotateX(0.5deg);">Reflection Color</span>
<div style="left:327.20px;top:325.60px;width:27.90px;height:9.50px;background:#9a9a9a;"></div>
<div style="left:360.40px;top:329.85px;width:80.30px;height:1.1px;background:repeating-linear-gradient(90deg,#181818 0 1.6px,#262626 1.6px 2.4px);"></div><div style="left:360.40px;top:329.75px;width:22.00px;height:1.30px;background:#b9bcbe;border-radius:1px;"></div><div style="left:380.80px;top:328.80px;width:3.2px;height:3.2px;border-radius:50%;background:#f6f6f6;box-shadow:0 0 0 1px #1e1e1e;"></div>
<svg style="left:449.00px;top:324.90px;" width="10.2" height="10.2" viewBox="0 0 10.2 10.2" fill="none"><rect x="0" y="0" width="10.2" height="10.2" fill="#444444"/><rect x="0" y="0" width="5.1" height="5.1" fill="#6a6a6a"/><rect x="5.1" y="5.1" width="5.1" height="5.1" fill="#6a6a6a"/><rect x="0.3" y="0.3" width="9.6" height="9.6" stroke="#5a5a5a" stroke-width="0.6" fill="none"/></svg>
<svg style="left:465.80px;top:326.50px;" width="7" height="7" viewBox="0 0 7 7" fill="none"><rect x="0" y="0" width="7" height="7" fill="#7d7d7d"/><path d="M1.3 3.6L2.9 5.4L5.9 1.2" stroke="#ffffff" stroke-width="1.15" fill="none"/></svg>
<div style="left:327.20px;top:338.20px;width:119.10px;height:2.00px;background:#d81c1c;"></div>
<span class="t" style="left:255px;top:340px;color:#b6b6b6;transform:perspective(1000px) translate3d(0,0.50px,0.1px) rotateX(0.5deg) scaleX(0.955);">Reflection Glossiness</span>
<span class="t" style="left:328px;top:340px;color:#d0d0d0;transform:perspective(1000px) translate3d(0,0.50px,0.1px) rotateX(0.5deg);">0,7</span>
<div style="left:360.40px;top:345.35px;width:80.30px;height:1.1px;background:repeating-linear-gradient(90deg,#181818 0 1.6px,#262626 1.6px 2.4px);"></div><div style="left:360.40px;top:345.25px;width:55.20px;height:1.30px;background:#b9bcbe;border-radius:1px;"></div><div style="left:414.00px;top:344.30px;width:3.2px;height:3.2px;border-radius:50%;background:#f6f6f6;box-shadow:0 0 0 1px #1e1e1e;"></div>
<svg style="left:449.00px;top:340.50px;" width="10.2" height="10.2" viewBox="0 0 10.2 10.2" fill="none"><rect x="0" y="0" width="10.2" height="10.2" fill="#444444"/><rect x="0" y="0" width="5.1" height="5.1" fill="#6a6a6a"/><rect x="5.1" y="5.1" width="5.1" height="5.1" fill="#6a6a6a"/><rect x="0.3" y="0.3" width="9.6" height="9.6" stroke="#5a5a5a" stroke-width="0.6" fill="none"/></svg>
<svg style="left:465.80px;top:342.10px;" width="7" height="7" viewBox="0 0 7 7" fill="none"><rect x="0" y="0" width="7" height="7" fill="#7d7d7d"/><path d="M1.3 3.6L2.9 5.4L5.9 1.2" stroke="#ffffff" stroke-width="1.15" fill="none"/></svg>
<div style="left:327.20px;top:352.90px;width:119.10px;height:2.00px;background:#d81c1c;"></div>
<span class="t" style="left:255px;top:355px;color:#a8a8a8;transform:perspective(1000px) translate3d(0,0.50px,0.1px) rotateX(0.5deg);">Fresnel</span>
<svg style="left:328.20px;top:357.50px;" width="7" height="7" viewBox="0 0 7 7" fill="none"><rect x="0" y="0" width="7" height="7" fill="#7d7d7d"/><path d="M1.3 3.6L2.9 5.4L5.9 1.2" stroke="#ffffff" stroke-width="1.15" fill="none"/></svg>
<span class="t" style="left:255px;top:370px;color:#a8a8a8;transform:perspective(1000px) translate3d(0,0.60px,0.1px) rotateX(0.5deg);">Reflection IOR</span>
<div style="left:328.00px;top:372.60px;width:7.40px;height:7.40px;background:#5e5e5e;"></div>
<span class="t" style="left:342px;top:370px;color:#686868;transform:perspective(1000px) translate3d(0,0.60px,0.1px) rotateX(0.5deg);">1,6</span>
<div style="left:374.50px;top:375.75px;width:66.20px;height:1.1px;background:repeating-linear-gradient(90deg,#181818 0 1.6px,#262626 1.6px 2.4px);"></div><div style="left:378.30px;top:374.00px;width:4.6px;height:4.6px;border-radius:50%;background:#505050;"></div>
<svg style="left:449.00px;top:370.60px;" width="10.2" height="10.2" viewBox="0 0 10.2 10.2" fill="none"><rect x="0" y="0" width="10.2" height="10.2" fill="#383838"/><rect x="0" y="0" width="5.1" height="5.1" fill="#4a4a4a"/><rect x="5.1" y="5.1" width="5.1" height="5.1" fill="#4a4a4a"/><rect x="0.3" y="0.3" width="9.6" height="9.6" stroke="#454545" stroke-width="0.6" fill="none"/></svg>
<svg style="left:465.80px;top:372.20px;" width="7" height="7" viewBox="0 0 7 7" fill="none"><rect x="0" y="0" width="7" height="7" fill="#474747"/><path d="M1.3 3.6L2.9 5.4L5.9 1.2" stroke="#6a6a6a" stroke-width="1.15" fill="none"/></svg>
<div style="left:249.00px;top:385.80px;width:227.30px;height:1.00px;background:#464646;"></div>
<svg style="left:251.98px;top:392.58px;" width="3.44" height="4.64" viewBox="0 0 4 5.4" fill="none"><path d="M0.3 0.1L3.5 2.7L0.3 5.3Z" fill="#e4e4e4"/></svg><span class="t" style="left:259px;top:389px;color:#e4e4e4;font-weight:700;transform:perspective(1000px) translate3d(0,0.30px,0.1px) rotateX(0.5deg) scaleX(0.93);">Refraction</span><div style="left:455.80px;top:392.10px;width:13px;height:5.4px;border-radius:2.7px;background:#a3bfd6;"></div><div style="left:464.60px;top:390.50px;width:8.6px;height:8.6px;border-radius:50%;background:#e9ebec;box-shadow:0 0.6px 1.2px rgba(0,0,0,.6);"></div>
<div style="left:249.00px;top:404.90px;width:227.30px;height:1.00px;background:#464646;"></div>
<svg style="left:251.98px;top:410.48px;" width="3.44" height="4.64" viewBox="0 0 4 5.4" fill="none"><path d="M0.3 0.1L3.5 2.7L0.3 5.3Z" fill="#e4e4e4"/></svg><span class="t" style="left:259px;top:407px;color:#e4e4e4;font-weight:700;transform:perspective(1000px) translate3d(0,0.20px,0.1px) rotateX(0.5deg) scaleX(0.93);">Opacity</span>
<div style="left:249.00px;top:419.80px;width:227.30px;height:63.70px;background:#3a3a38;"></div>
<div style="left:249.00px;top:419.80px;width:227.30px;height:15.00px;background:#464543;"></div>
<svg style="left:251.98px;top:425.08px;" width="3.44" height="4.64" viewBox="0 0 4 5.4" fill="none"><path d="M0.3 0.1L3.5 2.7L0.3 5.3Z" fill="#e4e4e4"/></svg>
<span class="t" style="left:259px;top:421px;color:#e4e4e4;font-weight:700;transform:perspective(1000px) translate3d(0,0.60px,0.1px) rotateX(0.5deg) scaleX(0.93);">Bump</span>
<div style="left:447.10px;top:424.70px;width:13px;height:5.4px;border-radius:2.7px;background:#a3bfd6;"></div><div style="left:455.90px;top:423.10px;width:8.6px;height:8.6px;border-radius:50%;background:#e9ebec;box-shadow:0 0.6px 1.2px rgba(0,0,0,.6);"></div>
<svg style="left:467.70px;top:423.00px;" width="2.6" height="8.6" viewBox="0 0 2.6 8.60" fill="none"><rect x="0.5" y="0.50" width="1.6" height="1.6" fill="#e2ecf4"/><rect x="0.5" y="3.50" width="1.6" height="1.6" fill="#e2ecf4"/><rect x="0.5" y="6.50" width="1.6" height="1.6" fill="#e2ecf4"/></svg>
<div style="left:249.00px;top:436.00px;width:227.30px;height:15.10px;background:#464543;"></div>
<svg style="left:251.98px;top:441.33px;" width="3.44" height="4.64" viewBox="0 0 4 5.4" fill="none"><path d="M0.3 0.1L3.5 2.7L0.3 5.3Z" fill="#e4e4e4"/></svg>
<span class="t" style="left:259px;top:437px;color:#e4e4e4;font-weight:700;transform:perspective(1000px) translate3d(0,0.85px,0.1px) rotateX(0.5deg) scaleX(0.93);">Displacement</span>
<div style="left:449.10px;top:440.75px;width:12.9px;height:5.4px;border-radius:2.7px;background:#1b1b1b;"></div><div style="left:445.50px;top:439.15px;width:8.6px;height:8.6px;border-radius:50%;background:#e9ebec;box-shadow:0 0.6px 1.2px rgba(0,0,0,.6);"></div>
<svg style="left:467.70px;top:439.25px;" width="2.6" height="8.6" viewBox="0 0 2.6 8.60" fill="none"><rect x="0.5" y="0.50" width="1.6" height="1.6" fill="#e2ecf4"/><rect x="0.5" y="3.50" width="1.6" height="1.6" fill="#e2ecf4"/><rect x="0.5" y="6.50" width="1.6" height="1.6" fill="#e2ecf4"/></svg>
<div style="left:249.00px;top:452.20px;width:227.30px;height:14.60px;background:#464543;"></div>
<svg style="left:251.98px;top:457.28px;" width="3.44" height="4.64" viewBox="0 0 4 5.4" fill="none"><path d="M0.3 0.1L3.5 2.7L0.3 5.3Z" fill="#e4e4e4"/></svg>
<span class="t" style="left:259px;top:453px;color:#e4e4e4;font-weight:700;transform:perspective(1000px) translate3d(0,0.80px,0.1px) rotateX(0.5deg) scaleX(0.93);">Material ID</span>
<svg style="left:467.70px;top:455.20px;" width="2.6" height="8.6" viewBox="0 0 2.6 8.60" fill="none"><rect x="0.5" y="0.50" width="1.6" height="1.6" fill="#e2ecf4"/><rect x="0.5" y="3.50" width="1.6" height="1.6" fill="#e2ecf4"/><rect x="0.5" y="6.50" width="1.6" height="1.6" fill="#e2ecf4"/></svg>
<div style="left:249.00px;top:467.90px;width:227.30px;height:15.60px;background:#464543;"></div>
<svg style="left:251.98px;top:473.48px;" width="3.44" height="4.64" viewBox="0 0 4 5.4" fill="none"><path d="M0.3 0.1L3.5 2.7L0.3 5.3Z" fill="#e4e4e4"/></svg>
<span class="t" style="left:259px;top:470px;color:#e4e4e4;font-weight:700;transform:perspective(1000px) translate3d(0,0.00px,0.1px) rotateX(0.5deg) scaleX(0.93);">Binding</span>
<div style="left:455.80px;top:473.00px;width:13px;height:5.4px;border-radius:2.7px;background:#a3bfd6;"></div><div style="left:464.60px;top:471.40px;width:8.6px;height:8.6px;border-radius:50%;background:#e9ebec;box-shadow:0 0.6px 1.2px rgba(0,0,0,.6);"></div>
<div style="left:249.00px;top:486.80px;width:227.30px;height:1.00px;background:#464646;"></div>
<span class="t" style="left:249px;top:493px;color:#a8a8a8;transform:perspective(1000px) translate3d(0,0.50px,0.1px) rotateX(0.5deg);">Can be Overridden</span>
<svg style="left:323.00px;top:495.40px;" width="7" height="7" viewBox="0 0 7 7" fill="none"><rect x="0" y="0" width="7" height="7" fill="#7d7d7d"/><path d="M1.3 3.6L2.9 5.4L5.9 1.2" stroke="#ffffff" stroke-width="1.15" fill="none"/></svg></div>
<div class="win" style="left:544px;top:0.5px"><div style="left:37.00px;top:69.70px;width:441.90px;height:18.80px;background:#ffffff;border-top:1px solid #dcdcdc;border-left:1px solid #dcdcdc;box-sizing:border-box;"></div>
<svg style="left:41.00px;top:73.30px;" width="11" height="11" viewBox="0 0 11 11" fill="none"><circle cx="5.5" cy="5.5" r="4.3" stroke="#1c1c1c" stroke-width="1.05"/><path d="M3.3 4.6L5.1 7.7L8.3 2.0" stroke="#1c1c1c" stroke-width="1.15" stroke-linejoin="round"/></svg>
<span class="t" style="text-shadow:0 0 0.5px rgba(0,0,0,.55);left:54px;top:73.5px;color:#000;transform:perspective(1000px) translate3d(0,0.00px,0.1px) rotateX(0.5deg) scaleX(0.968);">V-Ray Asset Editor</span>
<div style="left:410.00px;top:78.60px;width:6.00px;height:0.90px;background:#222;"></div>
<div style="left:436.20px;top:76.00px;width:5.80px;height:5.60px;background:transparent;border:0.8px solid #dadada;box-sizing:border-box;"></div>
<svg style="left:461.80px;top:74.90px;" width="8" height="8" viewBox="0 0 8 8" fill="none"><path d="M1 1L7 7M7 1L1 7" stroke="#1a1a1a" stroke-width="0.85"/></svg>
<div style="left:37.70px;top:88.30px;width:441.20px;height:434.30px;background:#464543;"></div>
<div style="left:478.90px;top:88.30px;width:0.01px;height:419.40px;background:#2c2c2c;"></div>
<div style="left:43.00px;top:115.20px;width:198.20px;height:15.30px;background:#2b2b2b;"></div>
<div style="left:43.00px;top:131.00px;width:198.20px;height:376.70px;background:#2e2e2e;border-top:0.8px solid #3a3a3a;box-sizing:border-box;"></div>
<svg style="left:43.00px;top:115.20px" width="198.20" height="392.50"><rect width="100%" height="100%" fill="url(#dp)"/></svg>
<div style="left:236.40px;top:131.30px;width:4.80px;height:46.70px;background:#6a6a6a;"></div>
<svg style="left:48.40px;top:93.30px;" width="16" height="16" viewBox="0 0 16 16" fill="none"><circle cx="8" cy="8" r="5.9" stroke="#d6d9dc" stroke-width="0.85"/><circle cx="8" cy="8" r="4.2" stroke="#a4a7aa" stroke-width="0.7"/><circle cx="8" cy="8" r="1.5" stroke="#b9bcbe" stroke-width="0.6"/><circle cx="8" cy="5.4" r="1.0" fill="#a9c3d8"/><circle cx="8" cy="10.6" r="1.0" fill="#a9c3d8"/><circle cx="5.4" cy="8" r="1.0" fill="#a9c3d8"/><circle cx="10.6" cy="8" r="1.0" fill="#a9c3d8"/></svg>
<svg style="left:69.50px;top:93.10px;" width="16" height="16" viewBox="0 0 16 16" fill="none"><path d="M5.6 10.6C4.2 9.6 3.3 8.2 3.3 6.4A4.7 4.7 0 0 1 12.7 6.4C12.7 8.2 11.8 9.6 10.4 10.6V12H5.6Z" stroke="#d6d9dc" stroke-width="0.9"/><path d="M6 13.6H10M6.6 15H9.4" stroke="#d6d9dc" stroke-width="0.8"/><path d="M6.6 7.4H9.4M8 5.4V7.4" stroke="#a9c3d8" stroke-width="0.9"/></svg>
<svg style="left:90.30px;top:93.30px;" width="16" height="16" viewBox="0 0 16 16" fill="none"><path d="M8 2.5L13.4 5.1V11.3L8 14.2L2.6 11.3V5.1Z" stroke="#d6d9dc" stroke-width="0.9" stroke-linejoin="round"/><path d="M2.8 5.2L8 7.9L13.2 5.2M8 7.9V14" stroke="#d6d9dc" stroke-width="0.8"/></svg>
<svg style="left:111.40px;top:93.30px;" width="16" height="16" viewBox="0 0 16 16" fill="none"><path d="M8 2.6L13.8 5.2L8 7.8L2.2 5.2Z" stroke="#d6d9dc" stroke-width="0.9" stroke-linejoin="round"/><path d="M2.2 8L8 10.6L13.8 8" stroke="#d6d9dc" stroke-width="0.9" stroke-linejoin="round"/><path d="M2.2 10.8L8 13.4L13.8 10.8" stroke="#d6d9dc" stroke-width="0.9" stroke-linejoin="round"/></svg>
<svg style="left:132.20px;top:93.30px;" width="16" height="16" viewBox="0 0 16 16" fill="none"><rect x="2.6" y="2.6" width="10.8" height="10.8" stroke="#d6d9dc" stroke-width="1"/><rect x="8.4" y="4.4" width="3.2" height="3.2" fill="#cfd3d6"/><circle cx="6.1" cy="9.9" r="1.7" fill="#a9c3d8"/></svg>
<div style="left:156.20px;top:93.20px;width:0.90px;height:16.00px;background:#8a8a8a;"></div>
<svg style="left:165.30px;top:93.20px;" width="16" height="16" viewBox="0 0 16 16" fill="none"><path d="M6.93 1.39L9.07 1.39L9.19 3.14L10.59 3.72L11.92 2.57L13.43 4.08L12.27 5.41L12.86 6.81L14.61 6.93L14.61 9.07L12.86 9.19L12.28 10.59L13.43 11.92L11.92 13.43L10.59 12.27L9.19 12.86L9.07 14.61L6.93 14.61L6.81 12.86L5.41 12.28L4.08 13.43L2.57 11.92L3.73 10.59L3.14 9.19L1.39 9.07L1.39 6.93L3.14 6.81L3.72 5.41L2.57 4.08L4.08 2.57L5.41 3.73L6.81 3.14Z" stroke="#d6d9dc" stroke-width="0.9" stroke-linejoin="round"/><circle cx="8" cy="8" r="2.4" stroke="#d6d9dc" stroke-width="0.8"/><circle cx="8" cy="8" r="0.8" fill="#9a9da0"/></svg>
<div style="left:190.00px;top:93.20px;width:0.90px;height:16.00px;background:#8a8a8a;"></div>
<svg style="left:198.00px;top:94.20px;" width="19" height="16" viewBox="0 0 19 16" fill="none"><rect x="7.8" y="1.8" width="3.2" height="1.8" fill="#8e8e8e"/><path d="M5.2 4.6C7 3.7 11.6 3.7 13.4 4.6C15 6.2 14.2 10.6 12 12.6H6.6C4.4 10.6 3.6 6.2 5.2 4.6Z" stroke="#d6d9dc" stroke-width="0.95" stroke-linejoin="round"/><path d="M4.7 8.6C3 8.2 2 6.4 1.4 4.8" stroke="#d6d9dc" stroke-width="0.95" stroke-linecap="round"/><path d="M14.2 5.6C16.4 4.6 17.2 6.4 16 8.2C15.2 9.3 14.4 9.9 13.6 10.2" stroke="#d6d9dc" stroke-width="0.95" stroke-linecap="round"/><path d="M18.2 11.2V14.6H14.8Z" fill="#d0d0d0"/></svg>
<svg style="left:219.60px;top:93.70px;" width="16" height="15" viewBox="0 0 16 15" fill="none"><rect x="0.8" y="1.4" width="14.4" height="12.6" stroke="#d6d9dc" stroke-width="0.85"/><path d="M1 4.1H15" stroke="#a7acb0" stroke-width="0.8"/><rect x="3.2" y="6" width="9.2" height="5.8" stroke="#d6d9dc" stroke-width="0.8"/><path d="M13.8 5.6V12.6" stroke="#8a8d90" stroke-width="0.8" stroke-dasharray="1 0.8"/><path d="M11.2 2.8H14" stroke="#8a8d90" stroke-width="0.7" stroke-dasharray="0.8 0.6"/></svg>
<svg style="left:47.90px;top:119.20px;" width="8" height="8" viewBox="0 0 8 8" fill="none"><circle cx="3.4" cy="3.4" r="2.3" stroke="#9a9a9a" stroke-width="0.95"/><path d="M5.1 5.1L7.3 7.3" stroke="#9a9a9a" stroke-width="1.1" stroke-linecap="round"/></svg>
<span class="t" style="left:58px;top:116.5px;color:#6c6c6c;font-style:italic;transform:perspective(1000px) translate3d(0,0.80px,0.1px) rotateX(0.5deg) scaleX(0.892);">Search Scene</span>
<span class="t" style="left:46px;top:133.5px;color:#e4e4e4;font-weight:700;transform:perspective(1000px) translate3d(0,0.30px,0.1px) rotateX(0.5deg) scaleX(0.934);">Materials</span>
<svg style="left:46.90px;top:152.06px;" width="2.8" height="3.78" viewBox="0 0 4 5.4" fill="none"><path d="M0.3 0.1L3.5 2.7L0.3 5.3Z" fill="#bcbcbc"/></svg>
<svg style="left:52.00px;top:147.85px;" width="12" height="12" viewBox="0 0 12 12" fill="none"><circle cx="6.2" cy="6.4" r="4.1" fill="#3a3a3a" stroke="#8e8e8e" stroke-width="0.7"/><circle cx="6.3" cy="6.6" r="2.6" fill="#474747" stroke="#6a6a6a" stroke-width="0.5" stroke-dasharray="1.2 0.7"/><path d="M2.2 4.6A4.6 4.6 0 0 1 6.4 1.2" stroke="#b4b4b4" stroke-width="0.8"/><path d="M5.6 1.9L7.1 0.9L8.4 2.4" stroke="#b4b4b4" stroke-width="0.7"/></svg>
<span class="t" style="left:66px;top:148.5px;color:#b2b2b2;transform:perspective(1000px) translate3d(0,0.55px,0.1px) rotateX(0.5deg);">1 Material</span>
<svg style="left:46.90px;top:166.03px;" width="2.8" height="3.78" viewBox="0 0 4 5.4" fill="none"><path d="M0.3 0.1L3.5 2.7L0.3 5.3Z" fill="#bcbcbc"/></svg>
<svg style="left:52.00px;top:161.82px;" width="12" height="12" viewBox="0 0 12 12" fill="none"><circle cx="5.9" cy="6" r="4.5" fill="#3c3c3c" stroke="#949494" stroke-width="0.7" stroke-dasharray="2.2 0.5"/><circle cx="5.9" cy="6" r="2.9" fill="#444" stroke="#6e6e6e" stroke-width="0.55" stroke-dasharray="1.3 0.8"/><circle cx="5.7" cy="5.6" r="0.5" fill="#8a8a8a"/></svg>
<span class="t" style="left:66px;top:162.5px;color:#b2b2b2;transform:perspective(1000px) translate3d(0,0.52px,0.1px) rotateX(0.5deg);">1 Material sub-material 1</span>
<svg style="left:46.90px;top:180.00px;" width="2.8" height="3.78" viewBox="0 0 4 5.4" fill="none"><path d="M0.3 0.1L3.5 2.7L0.3 5.3Z" fill="#bcbcbc"/></svg>
<svg style="left:52.00px;top:175.79px;" width="12" height="12" viewBox="0 0 12 12" fill="none"><circle cx="5.9" cy="6" r="4.5" fill="#3c3c3c" stroke="#949494" stroke-width="0.7" stroke-dasharray="2.2 0.5"/><circle cx="5.9" cy="6" r="2.9" fill="#444" stroke="#6e6e6e" stroke-width="0.55" stroke-dasharray="1.3 0.8"/><circle cx="5.7" cy="5.6" r="0.5" fill="#8a8a8a"/></svg>
<span class="t" style="left:66px;top:176.5px;color:#b2b2b2;transform:perspective(1000px) translate3d(0,0.49px,0.1px) rotateX(0.5deg);">1 Material sub-material 2</span>
<svg style="left:46.90px;top:193.97px;" width="2.8" height="3.78" viewBox="0 0 4 5.4" fill="none"><path d="M0.3 0.1L3.5 2.7L0.3 5.3Z" fill="#bcbcbc"/></svg>
<svg style="left:52.00px;top:189.76px;" width="12" height="12" viewBox="0 0 12 12" fill="none"><circle cx="5.9" cy="6" r="4.5" fill="#3c3c3c" stroke="#949494" stroke-width="0.7" stroke-dasharray="2.2 0.5"/><circle cx="5.9" cy="6" r="2.9" fill="#444" stroke="#6e6e6e" stroke-width="0.55" stroke-dasharray="1.3 0.8"/><circle cx="5.7" cy="5.6" r="0.5" fill="#8a8a8a"/></svg>
<span class="t" style="left:66px;top:190.5px;color:#b2b2b2;transform:perspective(1000px) translate3d(0,0.46px,0.1px) rotateX(0.5deg);">1 Material sub-material 3</span>
<svg style="left:46.90px;top:207.94px;" width="2.8" height="3.78" viewBox="0 0 4 5.4" fill="none"><path d="M0.3 0.1L3.5 2.7L0.3 5.3Z" fill="#bcbcbc"/></svg>
<svg style="left:52.00px;top:203.73px;" width="12" height="12" viewBox="0 0 12 12" fill="none"><circle cx="5.9" cy="6" r="4.5" fill="#3c3c3c" stroke="#949494" stroke-width="0.7" stroke-dasharray="2.2 0.5"/><circle cx="5.9" cy="6" r="2.9" fill="#444" stroke="#6e6e6e" stroke-width="0.55" stroke-dasharray="1.3 0.8"/><circle cx="5.7" cy="5.6" r="0.5" fill="#8a8a8a"/></svg>
<span class="t" style="left:66px;top:204.5px;color:#b2b2b2;transform:perspective(1000px) translate3d(0,0.43px,0.1px) rotateX(0.5deg) scaleX(0.979);">8e74346f58521aedd4faad91374eeb0d</span>
<svg style="left:52.00px;top:217.70px;" width="12" height="12" viewBox="0 0 12 12" fill="none"><circle cx="5.9" cy="6" r="4.5" fill="#3c3c3c" stroke="#949494" stroke-width="0.7" stroke-dasharray="2.2 0.5"/><circle cx="5.9" cy="6" r="2.9" fill="#444" stroke="#6e6e6e" stroke-width="0.55" stroke-dasharray="1.3 0.8"/><circle cx="5.7" cy="5.6" r="0.5" fill="#8a8a8a"/></svg>
<span class="t" style="left:66px;top:218.5px;color:#b2b2b2;transform:perspective(1000px) translate3d(0,0.40px,0.1px) rotateX(0.5deg) scaleX(0.925);">0010_neve</span>
<svg style="left:46.90px;top:235.88px;" width="2.8" height="3.78" viewBox="0 0 4 5.4" fill="none"><path d="M0.3 0.1L3.5 2.7L0.3 5.3Z" fill="#bcbcbc"/></svg>
<svg style="left:52.00px;top:231.67px;" width="12" height="12" viewBox="0 0 12 12" fill="none"><circle cx="5.9" cy="6" r="4.5" fill="#3c3c3c" stroke="#949494" stroke-width="0.7" stroke-dasharray="2.2 0.5"/><circle cx="5.9" cy="6" r="2.9" fill="#444" stroke="#6e6e6e" stroke-width="0.55" stroke-dasharray="1.3 0.8"/><circle cx="5.7" cy="5.6" r="0.5" fill="#8a8a8a"/></svg>
<span class="t" style="left:66px;top:232.5px;color:#b2b2b2;transform:perspective(1000px) translate3d(0,0.37px,0.1px) rotateX(0.5deg) scaleX(0.978);">21_jaquard fabric texture-seamless</span>
<svg style="left:52.00px;top:245.64px;" width="12" height="12" viewBox="0 0 12 12" fill="none"><circle cx="5.9" cy="6" r="4.5" fill="#3c3c3c" stroke="#949494" stroke-width="0.7" stroke-dasharray="2.2 0.5"/><circle cx="5.9" cy="6" r="2.9" fill="#444" stroke="#6e6e6e" stroke-width="0.55" stroke-dasharray="1.3 0.8"/><circle cx="5.7" cy="5.6" r="0.5" fill="#8a8a8a"/></svg>
<span class="t" style="left:66px;top:246.5px;color:#b2b2b2;transform:perspective(1000px) translate3d(0,0.34px,0.1px) rotateX(0.5deg) scaleX(0.945);">0035_castanho_claro</span>
<svg style="left:46.90px;top:263.82px;" width="2.8" height="3.78" viewBox="0 0 4 5.4" fill="none"><path d="M0.3 0.1L3.5 2.7L0.3 5.3Z" fill="#bcbcbc"/></svg>
<svg style="left:52.00px;top:259.61px;" width="12" height="12" viewBox="0 0 12 12" fill="none"><circle cx="5.9" cy="6" r="4.5" fill="#3c3c3c" stroke="#949494" stroke-width="0.7" stroke-dasharray="2.2 0.5"/><circle cx="5.9" cy="6" r="2.9" fill="#444" stroke="#6e6e6e" stroke-width="0.55" stroke-dasharray="1.3 0.8"/><circle cx="5.7" cy="5.6" r="0.5" fill="#8a8a8a"/></svg>
<span class="t" style="left:66px;top:260.5px;color:#b2b2b2;transform:perspective(1000px) translate3d(0,0.31px,0.1px) rotateX(0.5deg) scaleX(0.978);">39_jaquard fabric texture-seamless</span>
<svg style="left:52.00px;top:273.58px;" width="12" height="12" viewBox="0 0 12 12" fill="none"><circle cx="5.9" cy="6" r="4.5" fill="#3c3c3c" stroke="#949494" stroke-width="0.7" stroke-dasharray="2.2 0.5"/><circle cx="5.9" cy="6" r="2.9" fill="#444" stroke="#6e6e6e" stroke-width="0.55" stroke-dasharray="1.3 0.8"/><circle cx="5.7" cy="5.6" r="0.5" fill="#8a8a8a"/></svg>
<span class="t" style="left:66px;top:274.5px;color:#b2b2b2;transform:perspective(1000px) translate3d(0,0.28px,0.1px) rotateX(0.5deg) scaleX(0.938);">0050_limão_seda</span>
<svg style="left:46.90px;top:291.76px;" width="2.8" height="3.78" viewBox="0 0 4 5.4" fill="none"><path d="M0.3 0.1L3.5 2.7L0.3 5.3Z" fill="#bcbcbc"/></svg>
<svg style="left:52.00px;top:287.55px;" width="12" height="12" viewBox="0 0 12 12" fill="none"><circle cx="5.9" cy="6" r="4.5" fill="#3c3c3c" stroke="#949494" stroke-width="0.7" stroke-dasharray="2.2 0.5"/><circle cx="5.9" cy="6" r="2.9" fill="#444" stroke="#6e6e6e" stroke-width="0.55" stroke-dasharray="1.3 0.8"/><circle cx="5.7" cy="5.6" r="0.5" fill="#8a8a8a"/></svg>
<span class="t" style="left:66px;top:288.5px;color:#b2b2b2;transform:perspective(1000px) translate3d(0,0.25px,0.1px) rotateX(0.5deg) scaleX(0.996);">56_wood fine medium color texture-seamless</span>
<svg style="left:52.00px;top:301.52px;" width="12" height="12" viewBox="0 0 12 12" fill="none"><circle cx="5.9" cy="6" r="4.5" fill="#3c3c3c" stroke="#949494" stroke-width="0.7" stroke-dasharray="2.2 0.5"/><circle cx="5.9" cy="6" r="2.9" fill="#444" stroke="#6e6e6e" stroke-width="0.55" stroke-dasharray="1.3 0.8"/><circle cx="5.7" cy="5.6" r="0.5" fill="#8a8a8a"/></svg>
<span class="t" style="left:66px;top:302.5px;color:#b2b2b2;transform:perspective(1000px) translate3d(0,0.22px,0.1px) rotateX(0.5deg) scaleX(0.963);">0117_branco_fantasma</span>
<svg style="left:52.00px;top:315.49px;" width="12" height="12" viewBox="0 0 12 12" fill="none"><circle cx="5.9" cy="6" r="4.5" fill="#3c3c3c" stroke="#949494" stroke-width="0.7" stroke-dasharray="2.2 0.5"/><circle cx="5.9" cy="6" r="2.9" fill="#444" stroke="#6e6e6e" stroke-width="0.55" stroke-dasharray="1.3 0.8"/><circle cx="5.7" cy="5.6" r="0.5" fill="#8a8a8a"/></svg>
<span class="t" style="left:66px;top:316.5px;color:#b2b2b2;transform:perspective(1000px) translate3d(0,0.19px,0.1px) rotateX(0.5deg) scaleX(0.93);">0130_cinza_claro</span>
<svg style="left:52.00px;top:329.46px;" width="12" height="12" viewBox="0 0 12 12" fill="none"><circle cx="5.9" cy="6" r="4.5" fill="#3c3c3c" stroke="#949494" stroke-width="0.7" stroke-dasharray="2.2 0.5"/><circle cx="5.9" cy="6" r="2.9" fill="#444" stroke="#6e6e6e" stroke-width="0.55" stroke-dasharray="1.3 0.8"/><circle cx="5.7" cy="5.6" r="0.5" fill="#8a8a8a"/></svg>
<span class="t" style="left:66px;top:330.5px;color:#b2b2b2;transform:perspective(1000px) translate3d(0,0.16px,0.1px) rotateX(0.5deg) scaleX(0.93);">0136_carvão</span>
<svg style="left:46.90px;top:347.64px;" width="2.8" height="3.78" viewBox="0 0 4 5.4" fill="none"><path d="M0.3 0.1L3.5 2.7L0.3 5.3Z" fill="#bcbcbc"/></svg>
<svg style="left:52.00px;top:343.43px;" width="12" height="12" viewBox="0 0 12 12" fill="none"><circle cx="5.9" cy="6" r="4.5" fill="#3c3c3c" stroke="#949494" stroke-width="0.7" stroke-dasharray="2.2 0.5"/><circle cx="5.9" cy="6" r="2.9" fill="#444" stroke="#6e6e6e" stroke-width="0.55" stroke-dasharray="1.3 0.8"/><circle cx="5.7" cy="5.6" r="0.5" fill="#8a8a8a"/></svg>
<span class="t" style="left:66px;top:344.5px;color:#b2b2b2;transform:perspective(1000px) translate3d(0,0.13px,0.1px) rotateX(0.5deg) scaleX(0.984);">159_wood decking texture-seamless</span>
<svg style="left:46.90px;top:361.61px;" width="2.8" height="3.78" viewBox="0 0 4 5.4" fill="none"><path d="M0.3 0.1L3.5 2.7L0.3 5.3Z" fill="#bcbcbc"/></svg>
<svg style="left:52.00px;top:357.40px;" width="12" height="12" viewBox="0 0 12 12" fill="none"><circle cx="5.9" cy="6" r="4.5" fill="#3c3c3c" stroke="#949494" stroke-width="0.7" stroke-dasharray="2.2 0.5"/><circle cx="5.9" cy="6" r="2.9" fill="#444" stroke="#6e6e6e" stroke-width="0.55" stroke-dasharray="1.3 0.8"/><circle cx="5.7" cy="5.6" r="0.5" fill="#8a8a8a"/></svg>
<span class="t" style="left:66px;top:358.5px;color:#b2b2b2;transform:perspective(1000px) translate3d(0,0.10px,0.1px) rotateX(0.5deg) scaleX(0.991);">172_parquet medium color texture-seamless</span>
<svg style="left:46.90px;top:375.58px;" width="2.8" height="3.78" viewBox="0 0 4 5.4" fill="none"><path d="M0.3 0.1L3.5 2.7L0.3 5.3Z" fill="#bcbcbc"/></svg>
<svg style="left:52.00px;top:371.37px;" width="12" height="12" viewBox="0 0 12 12" fill="none"><circle cx="5.9" cy="6" r="4.5" fill="#3c3c3c" stroke="#949494" stroke-width="0.7" stroke-dasharray="2.2 0.5"/><circle cx="5.9" cy="6" r="2.9" fill="#444" stroke="#6e6e6e" stroke-width="0.55" stroke-dasharray="1.3 0.8"/><circle cx="5.7" cy="5.6" r="0.5" fill="#8a8a8a"/></svg>
<span class="t" style="left:66px;top:372.5px;color:#b2b2b2;transform:perspective(1000px) translate3d(0,0.07px,0.1px) rotateX(0.5deg) scaleX(0.975);">233611fb13a85cc7dfaa46dca6a79be2</span>
<svg style="left:46.90px;top:389.55px;" width="2.8" height="3.78" viewBox="0 0 4 5.4" fill="none"><path d="M0.3 0.1L3.5 2.7L0.3 5.3Z" fill="#bcbcbc"/></svg>
<svg style="left:52.00px;top:385.34px;" width="12" height="12" viewBox="0 0 12 12" fill="none"><circle cx="5.9" cy="6" r="4.5" fill="#3c3c3c" stroke="#949494" stroke-width="0.7" stroke-dasharray="2.2 0.5"/><circle cx="5.9" cy="6" r="2.9" fill="#444" stroke="#6e6e6e" stroke-width="0.55" stroke-dasharray="1.3 0.8"/><circle cx="5.7" cy="5.6" r="0.5" fill="#8a8a8a"/></svg>
<span class="t" style="left:66px;top:386.5px;color:#b2b2b2;transform:perspective(1000px) translate3d(0,0.04px,0.1px) rotateX(0.5deg) scaleX(0.94);">.corda</span>
<svg style="left:52.00px;top:399.31px;" width="12" height="12" viewBox="0 0 12 12" fill="none"><circle cx="5.9" cy="6" r="4.5" fill="#3c3c3c" stroke="#949494" stroke-width="0.7" stroke-dasharray="2.2 0.5"/><circle cx="5.9" cy="6" r="2.9" fill="#444" stroke="#6e6e6e" stroke-width="0.55" stroke-dasharray="1.3 0.8"/><circle cx="5.7" cy="5.6" r="0.5" fill="#8a8a8a"/></svg>
<span class="t" style="left:66px;top:400.5px;color:#b2b2b2;transform:perspective(1000px) translate3d(0,0.01px,0.1px) rotateX(0.5deg);">&lt;auto&gt;</span>
<svg style="left:52.00px;top:413.28px;" width="12" height="12" viewBox="0 0 12 12" fill="none"><circle cx="5.9" cy="6" r="4.5" fill="#3c3c3c" stroke="#949494" stroke-width="0.7" stroke-dasharray="2.2 0.5"/><circle cx="5.9" cy="6" r="2.9" fill="#444" stroke="#6e6e6e" stroke-width="0.55" stroke-dasharray="1.3 0.8"/><circle cx="5.7" cy="5.6" r="0.5" fill="#8a8a8a"/></svg>
<span class="t" style="left:66px;top:413.5px;color:#b2b2b2;transform:perspective(1000px) translate3d(0,0.98px,0.1px) rotateX(0.5deg);">&lt;auto&gt;1</span>
<svg style="left:52.00px;top:427.25px;" width="12" height="12" viewBox="0 0 12 12" fill="none"><circle cx="5.9" cy="6" r="4.5" fill="#3c3c3c" stroke="#949494" stroke-width="0.7" stroke-dasharray="2.2 0.5"/><circle cx="5.9" cy="6" r="2.9" fill="#444" stroke="#6e6e6e" stroke-width="0.55" stroke-dasharray="1.3 0.8"/><circle cx="5.7" cy="5.6" r="0.5" fill="#8a8a8a"/></svg>
<span class="t" style="left:66px;top:427.5px;color:#b2b2b2;transform:perspective(1000px) translate3d(0,0.95px,0.1px) rotateX(0.5deg);">&lt;auto&gt;5</span>
<svg style="left:46.90px;top:445.43px;" width="2.8" height="3.78" viewBox="0 0 4 5.4" fill="none"><path d="M0.3 0.1L3.5 2.7L0.3 5.3Z" fill="#bcbcbc"/></svg>
<svg style="left:52.00px;top:441.22px;" width="12" height="12" viewBox="0 0 12 12" fill="none"><circle cx="5.9" cy="6" r="4.5" fill="#3c3c3c" stroke="#949494" stroke-width="0.7" stroke-dasharray="2.2 0.5"/><circle cx="5.9" cy="6" r="2.9" fill="#444" stroke="#6e6e6e" stroke-width="0.55" stroke-dasharray="1.3 0.8"/><circle cx="5.7" cy="5.6" r="0.5" fill="#8a8a8a"/></svg>
<span class="t" style="left:66px;top:441.5px;color:#b2b2b2;transform:perspective(1000px) translate3d(0,0.92px,0.1px) rotateX(0.5deg) scaleX(0.98);">&lt;Beige&gt;1</span>
<svg style="left:46.90px;top:459.40px;" width="2.8" height="3.78" viewBox="0 0 4 5.4" fill="none"><path d="M0.3 0.1L3.5 2.7L0.3 5.3Z" fill="#bcbcbc"/></svg>
<svg style="left:52.00px;top:455.19px;" width="12" height="12" viewBox="0 0 12 12" fill="none"><circle cx="5.9" cy="6" r="4.5" fill="#3c3c3c" stroke="#949494" stroke-width="0.7" stroke-dasharray="2.2 0.5"/><circle cx="5.9" cy="6" r="2.9" fill="#444" stroke="#6e6e6e" stroke-width="0.55" stroke-dasharray="1.3 0.8"/><circle cx="5.7" cy="5.6" r="0.5" fill="#8a8a8a"/></svg>
<span class="t" style="left:66px;top:455.5px;color:#b2b2b2;transform:perspective(1000px) translate3d(0,0.89px,0.1px) rotateX(0.5deg) scaleX(0.947);">&lt;Dark Green Glass&gt;</span>
<svg style="left:52.00px;top:469.16px;" width="12" height="12" viewBox="0 0 12 12" fill="none"><circle cx="5.9" cy="6" r="4.5" fill="#3c3c3c" stroke="#949494" stroke-width="0.7" stroke-dasharray="2.2 0.5"/><circle cx="5.9" cy="6" r="2.9" fill="#444" stroke="#6e6e6e" stroke-width="0.55" stroke-dasharray="1.3 0.8"/><circle cx="5.7" cy="5.6" r="0.5" fill="#8a8a8a"/></svg>
<span class="t" style="left:66px;top:469.5px;color:#b2b2b2;transform:perspective(1000px) translate3d(0,0.86px,0.1px) rotateX(0.5deg) scaleX(0.964);">[0128_White]1</span>
<svg style="left:52.00px;top:483.13px;" width="12" height="12" viewBox="0 0 12 12" fill="none"><circle cx="5.9" cy="6" r="4.5" fill="#3c3c3c" stroke="#949494" stroke-width="0.7" stroke-dasharray="2.2 0.5"/><circle cx="5.9" cy="6" r="2.9" fill="#444" stroke="#6e6e6e" stroke-width="0.55" stroke-dasharray="1.3 0.8"/><circle cx="5.7" cy="5.6" r="0.5" fill="#8a8a8a"/></svg>
<span class="t" style="left:66px;top:483.5px;color:#b2b2b2;transform:perspective(1000px) translate3d(0,0.83px,0.1px) rotateX(0.5deg) scaleX(0.964);">[0128_White]2</span>
<svg style="left:52.00px;top:497.10px;" width="12" height="12" viewBox="0 0 12 12" fill="none"><circle cx="5.9" cy="6" r="4.5" fill="#3c3c3c" stroke="#949494" stroke-width="0.7" stroke-dasharray="2.2 0.5"/><circle cx="5.9" cy="6" r="2.9" fill="#444" stroke="#6e6e6e" stroke-width="0.55" stroke-dasharray="1.3 0.8"/><circle cx="5.7" cy="5.6" r="0.5" fill="#8a8a8a"/></svg>
<span class="t" style="left:66px;top:497.5px;color:#b2b2b2;transform:perspective(1000px) translate3d(0,0.80px,0.1px) rotateX(0.5deg) scaleX(0.964);">[Color_000]2</span>
<div style="left:37.70px;top:507.70px;width:441.20px;height:14.90px;background:#464543;"></div>
<div style="left:37.70px;top:521.90px;width:441.20px;height:0.70px;background:#222222;"></div>
<svg style="left:52.40px;top:508.60px;" width="12" height="12" viewBox="0 0 12 12" fill="none"><circle cx="5.2" cy="6.4" r="4.1" stroke="#d8d8d8" stroke-width="0.9"/><path d="M2.4 5.2L5.4 6.6L4.6 9.8M5.4 6.6L7.6 4.4" stroke="#bdbdbd" stroke-width="0.7"/><path d="M9.2 0.6V5M7 2.8H11.4" stroke="#eaeaea" stroke-width="1.05"/></svg>
<svg style="left:81.70px;top:510.40px;" width="11.4" height="10" viewBox="0 0 11.4 10" fill="none"><path d="M0.8 8.6V1.6H3.8L4.8 2.8H9.2V4.2" stroke="#e0e0e0" stroke-width="0.9" stroke-linejoin="round"/><path d="M0.9 8.6L2.6 4.4H10.6L9 8.6Z" stroke="#e8e8e8" stroke-width="0.95" stroke-linejoin="round" fill="#4d4d4d"/></svg>
<svg style="left:111.70px;top:510.40px;" width="9.2" height="10" viewBox="0 0 9.2 10" fill="none"><path d="M0.9 0.9H6.6L8.3 2.6V9.1H0.9Z" stroke="#8e8e8e" stroke-width="0.9" stroke-linejoin="round"/><rect x="2.6" y="1.2" width="3.6" height="2.6" fill="#7c7c7c"/><rect x="2.3" y="5.4" width="4.6" height="3.4" fill="#868686"/></svg>
<svg style="left:141.50px;top:510.00px;" width="8.2" height="10" viewBox="0 0 8.2 10" fill="none"><path d="M0.6 1.9H7.6" stroke="#d8d8d8" stroke-width="0.95"/><path d="M2.8 1.6V0.6H5.4V1.6" stroke="#c4c4c4" stroke-width="0.7"/><path d="M1.3 2.2V9H6.9V2.2" stroke="#d0d0d0" stroke-width="0.9" stroke-linejoin="round"/><rect x="2.6" y="3.6" width="3" height="2.2" fill="#9c9c9c"/></svg>
<svg style="left:221.40px;top:509.70px;" width="9.2" height="10.4" viewBox="0 0 9.2 10.4" fill="none"><path d="M4.6 0.6V4.6" stroke="#e8e8e8" stroke-width="1.2"/><path d="M2.4 4.8H6.8L7.8 7H1.4Z" fill="#c8c8c8"/><path d="M0.6 9.4H8.6M1.2 7.9H8" stroke="#e4e4e4" stroke-width="0.9"/></svg>
<svg style="left:430.90px;top:511.00px;" width="8.6" height="8" viewBox="0 0 8.6 8" fill="none"><path d="M0.5 4L4.2 0.8V2.9H8.2V5.1H4.2V7.2Z" fill="#f0f0f0"/></svg>
<svg style="left:460.40px;top:510.90px;" width="7.2" height="8.2" viewBox="0 0 7.2 8.2" fill="none"><path d="M3.6 0.4L6.8 3.8H4.8V7.8H2.4V3.8H0.4Z" fill="#7c7c7c"/></svg>
<svg style="left:38.20px;top:300.70px;" width="4" height="6.6" viewBox="0 0 4 6.6" fill="none"><path d="M3.3 0.6L0.8 3.3L3.3 6" stroke="#b8b8b8" stroke-width="1.3" stroke-linejoin="miter"/></svg>
<svg style="left:241.80px;top:300.70px;" width="4" height="6.6" viewBox="0 0 4 6.6" fill="none"><path d="M3.3 0.6L0.8 3.3L3.3 6" stroke="#b8b8b8" stroke-width="1.3" stroke-linejoin="miter"/></svg>
<div style="left:247.00px;top:88.00px;width:231.90px;height:17.00px;background:#2c2c2c;"></div>
<svg style="left:247.00px;top:88.00px" width="231.90" height="17.00"><rect width="100%" height="100%" fill="url(#dp)"/></svg>
<div style="left:247px;top:105px;width:50px;height:131.9px;background-color:#222222;background-image:conic-gradient(#2e2e2e 25%,#222222 0 50%,#2e2e2e 0 75%,#222222 0);background-size:17.6px 17.44px;background-position:-9.1px 0px;"></div>
<div style="left:429px;top:105px;width:49.90px;height:131.9px;background-color:#222222;background-image:conic-gradient(#2e2e2e 25%,#222222 0 50%,#2e2e2e 0 75%,#222222 0);background-size:17.6px 17.44px;background-position:0.4px 0px;"></div>
<div style="left:296.9px;top:105px;width:132.1px;height:132.3px;overflow:hidden"><svg width="132.1" height="132.3" viewBox="0 0 132.1 132.3" style="left:0;top:0"><use href="#wallg"/></svg></div>
<svg style="left:250.30px;top:92.70px;" width="9.4" height="7.8" viewBox="0 0 9.4 7.8" fill="none"><path d="M0.3 3.9L2.6 3.0V4.8Z" fill="#e4e4e4"/><ellipse cx="4.5" cy="3.9" rx="1.7" ry="3.1" stroke="#b5c9d8" stroke-width="0.8" fill="#5a5a5a"/><path d="M6 1.6H7.6C8.3 1.6 8.7 2.6 8.7 3.9C8.7 5.2 8.3 6.2 7.6 6.2H6" stroke="#e0e0e0" stroke-width="0.8"/><rect x="7.7" y="2.4" width="1.1" height="3" fill="#f0f0f0"/></svg>
<svg style="left:425.30px;top:92.90px;" width="7" height="7.4" viewBox="0 0 7 7.4" fill="none"><rect x="0.8" y="0.8" width="5.4" height="5.8" rx="1.1" stroke="#dedede" stroke-width="0.9"/><rect x="1.7" y="1.8" width="3.6" height="3.8" fill="#3a3a3a"/></svg>
<svg style="left:438.20px;top:92.80px;" width="9" height="7.4" viewBox="0 0 9 7.4" fill="none"><path d="M3.6 1.5H5.2" stroke="#9a9a9a" stroke-width="0.9"/><path d="M2.3 2.6C3.4 2.1 5.6 2.1 6.7 2.6C7.4 3.6 7 5.6 6 6.4H3C2 5.6 1.6 3.6 2.3 2.6Z" stroke="#b8b8b8" stroke-width="0.8"/><path d="M2 4.4C1.2 4.2 0.7 3.4 0.5 2.7M7 3.2C8.2 2.6 8.6 3.8 7.8 4.6C7.5 4.9 7.1 5.2 6.8 5.3" stroke="#b8b8b8" stroke-width="0.75" stroke-linecap="round"/></svg>
<span class="t" style="left:452px;top:90.5px;color:#e8e8e8;font-size:7.4px;font-weight:700;transform:perspective(1000px) translate3d(0,0.60px,0.1px) rotateX(0.5deg) scaleX(0.95);"><i style="position:relative;top:-0.9px;font-style:normal">1</i>/<i style="position:relative;top:0.9px;font-style:normal">1</i></span>
<svg style="left:459.60px;top:99.40px;" width="3.8" height="3.8" viewBox="0 0 3.8 3.8" fill="none"><path d="M3.6 0.2V3.6H0.2Z" fill="#eeeeee"/></svg>
<svg style="left:469.35px;top:91.85px;" width="2.7" height="9.1" viewBox="0 0 2.7 9.10" fill="none"><rect x="0.5" y="0.50" width="1.7" height="1.7" fill="#e2ecf4"/><rect x="0.5" y="3.70" width="1.7" height="1.7" fill="#e2ecf4"/><rect x="0.5" y="6.90" width="1.7" height="1.7" fill="#e2ecf4"/></svg>
<div style="left:247.00px;top:236.80px;width:231.90px;height:3.20px;background:#6a6c6a;"></div>
<div style="left:247.00px;top:240.20px;width:231.90px;height:267.50px;background:#2e2e2e;"></div>
<svg style="left:247.00px;top:240.20px" width="231.90" height="267.50"><rect width="100%" height="100%" fill="url(#dp)"/></svg>
<span class="t" style="left:249px;top:241.5px;color:#e0e0e0;transform:perspective(1000px) translate3d(0,0.60px,0.1px) rotateX(0.5deg) scaleX(0.947);">Generic</span>
<svg style="left:428.00px;top:243.20px;" width="9.2" height="8.8" viewBox="0 0 9.2 8.8" fill="none"><path d="M1.6 1.3H6.4" stroke="#686868" stroke-width="0.7"/><circle cx="2.4" cy="1.3" r="0.8" fill="#7a7a7a"/><path d="M0.4 4.4H8.8" stroke="#e4e4e4" stroke-width="0.9"/><circle cx="5.9" cy="4.4" r="1.35" fill="#eef2f6"/><path d="M1.6 7.5H6.4" stroke="#686868" stroke-width="0.7"/><circle cx="2.4" cy="7.5" r="0.8" fill="#7a7a7a"/></svg>
<div style="left:442.40px;top:243.00px;width:0.80px;height:10.00px;background:#555;"></div>
<svg style="left:448.70px;top:243.20px;" width="9.2" height="9.2" viewBox="0 0 9.2 9.2" fill="none"><path d="M4.6 0.2V4.6M2.4 2.4H6.8" stroke="#e6edf3" stroke-width="0.95"/><rect x="0.3" y="5.2" width="8.6" height="1.4" fill="#9c9c9c"/><rect x="0.3" y="7.5" width="8.6" height="1.3" fill="#dfe9f1"/></svg>
<svg style="left:464.00px;top:243.10px;" width="9.6" height="9.2" viewBox="0 0 9.6 9.2" fill="none"><path d="M4.8 0.4V4.8" stroke="#a8a8a8" stroke-width="1.2"/><path d="M3 1.9H6.6" stroke="#c8d6e2" stroke-width="0.9"/><path d="M0.6 3.4C1 5.4 2 6.2 3.4 6.4H8.6V5" stroke="#e4ecf2" stroke-width="0.95" stroke-linejoin="round"/><path d="M1 6.6L2.6 8.4H8.8V6.6" stroke="#dfe9f1" stroke-width="0.9" stroke-linejoin="round"/></svg>
<div style="left:249.00px;top:255.20px;width:227.30px;height:15.40px;background:#464543;"></div><svg style="left:251.98px;top:260.68px;" width="3.44" height="4.64" viewBox="0 0 4 5.4" fill="none"><path d="M0.3 0.1L3.5 2.7L0.3 5.3Z" fill="#e4e4e4"/></svg><div style="left:259.20px;top:261.30px;width:9.40px;height:2.60px;background:#9a9a9a;"></div><span class="t" style="left:272px;top:256.5px;color:#e4e4e4;font-weight:700;transform:perspective(1000px) translate3d(0,0.50px,0.1px) rotateX(0.5deg) scaleX(0.868);">VRayBRDF</span><div style="left:349px;top:261.50px;width:28px;height:2.2px;border-top:0.7px solid #8a8a8a;border-bottom:0.7px solid #777;box-sizing:border-box;opacity:.8"></div><svg style="left:467.90px;top:258.60px;" width="2.6" height="8.6" viewBox="0 0 2.6 8.60" fill="none"><rect x="0.5" y="0.50" width="1.6" height="1.6" fill="#e2ecf4"/><rect x="0.5" y="3.50" width="1.6" height="1.6" fill="#e2ecf4"/><rect x="0.5" y="6.50" width="1.6" height="1.6" fill="#e2ecf4"/></svg>
<div style="left:249.00px;top:270.00px;width:227.30px;height:2.00px;background:#3a3a38;"></div>
<div style="left:249.00px;top:271.60px;width:227.30px;height:15.00px;background:#464543;"></div>
<svg style="left:250.90px;top:277.60px;" width="5.4" height="4" viewBox="0 0 5.4 4" fill="none"><path d="M0.3 0.6L5.1 0.6L2.7 3.4Z" fill="#e0e0e0"/></svg>
<span class="t" style="left:259px;top:273.5px;color:#e4e4e4;font-weight:700;transform:perspective(1000px) translate3d(0,0.70px,0.1px) rotateX(0.5deg) scaleX(0.93);">Bump</span>
<div style="left:447.10px;top:276.50px;width:13px;height:5.4px;border-radius:2.7px;background:#a3bfd6;"></div><div style="left:455.90px;top:274.90px;width:8.6px;height:8.6px;border-radius:50%;background:#e9ebec;box-shadow:0 0.6px 1.2px rgba(0,0,0,.6);"></div>
<svg style="left:467.70px;top:274.90px;" width="2.6" height="8.6" viewBox="0 0 2.6 8.60" fill="none"><rect x="0.5" y="0.50" width="1.6" height="1.6" fill="#e2ecf4"/><rect x="0.5" y="3.50" width="1.6" height="1.6" fill="#e2ecf4"/><rect x="0.5" y="6.50" width="1.6" height="1.6" fill="#e2ecf4"/></svg>
<span class="t" style="left:249px;top:289.5px;color:#a8a8a8;transform:perspective(1000px) translate3d(0,0.30px,0.1px) rotateX(0.5deg) scaleX(1.04);">Mode / Map</span>
<span class="t" style="left:322px;top:289.5px;color:#b8b8b8;transform:perspective(1000px) translate3d(0,0.30px,0.1px) rotateX(0.5deg);">Bump Map</span>
<svg style="left:462.60px;top:290.40px;" width="10.2" height="10.2" viewBox="0 0 10.2 10.2" fill="none"><rect x="0" y="0" width="10.2" height="10.2" fill="#4e4e4e"/><rect x="0" y="0" width="5.1" height="5.1" fill="#a9c7de"/><rect x="5.1" y="5.1" width="5.1" height="5.1" fill="#a9c7de"/><rect x="0.3" y="0.3" width="9.6" height="9.6" stroke="#bcd3e4" stroke-width="0.6" fill="none"/></svg>
<span class="t" style="left:249px;top:304.5px;color:#a8a8a8;transform:perspective(1000px) translate3d(0,0.40px,0.1px) rotateX(0.5deg);">Amount</span>
<span class="t" style="left:322px;top:304.5px;color:#c8c8c8;transform:perspective(1000px) translate3d(0,0.40px,0.1px) rotateX(0.5deg);">1,05</span>
<div style="left:354.50px;top:310.35px;width:86.30px;height:1.1px;background:repeating-linear-gradient(90deg,#181818 0 1.6px,#262626 1.6px 2.4px);"></div><div style="left:354.50px;top:310.25px;width:45.30px;height:1.30px;background:#b9bcbe;border-radius:1px;"></div><div style="left:398.20px;top:309.30px;width:3.2px;height:3.2px;border-radius:50%;background:#f6f6f6;box-shadow:0 0 0 1px #1e1e1e;"></div>
<svg style="left:448.90px;top:305.40px;" width="10.2" height="10.2" viewBox="0 0 10.2 10.2" fill="none"><rect x="0" y="0" width="10.2" height="10.2" fill="#444444"/><rect x="0" y="0" width="5.1" height="5.1" fill="#6a6a6a"/><rect x="5.1" y="5.1" width="5.1" height="5.1" fill="#6a6a6a"/><rect x="0.3" y="0.3" width="9.6" height="9.6" stroke="#5a5a5a" stroke-width="0.6" fill="none"/></svg>
<svg style="left:465.50px;top:307.20px;" width="7" height="7" viewBox="0 0 7 7" fill="none"><rect x="0" y="0" width="7" height="7" fill="#7d7d7d"/><path d="M1.3 3.6L2.9 5.4L5.9 1.2" stroke="#ffffff" stroke-width="1.15" fill="none"/></svg>
<div style="left:249.00px;top:317.80px;width:227.30px;height:47.40px;background:#3a3a38;"></div>
<div style="left:249.00px;top:317.80px;width:227.30px;height:15.80px;background:#464543;"></div>
<svg style="left:251.98px;top:323.48px;" width="3.44" height="4.64" viewBox="0 0 4 5.4" fill="none"><path d="M0.3 0.1L3.5 2.7L0.3 5.3Z" fill="#e4e4e4"/></svg>
<span class="t" style="left:259px;top:319.5px;color:#e4e4e4;font-weight:700;transform:perspective(1000px) translate3d(0,0.50px,0.1px) rotateX(0.5deg) scaleX(0.93);">Displacement</span>
<div style="left:449.10px;top:322.90px;width:12.9px;height:5.4px;border-radius:2.7px;background:#1b1b1b;"></div><div style="left:445.50px;top:321.30px;width:8.6px;height:8.6px;border-radius:50%;background:#e9ebec;box-shadow:0 0.6px 1.2px rgba(0,0,0,.6);"></div>
<svg style="left:467.70px;top:321.40px;" width="2.6" height="8.6" viewBox="0 0 2.6 8.60" fill="none"><rect x="0.5" y="0.50" width="1.6" height="1.6" fill="#e2ecf4"/><rect x="0.5" y="3.50" width="1.6" height="1.6" fill="#e2ecf4"/><rect x="0.5" y="6.50" width="1.6" height="1.6" fill="#e2ecf4"/></svg>
<div style="left:249.00px;top:334.60px;width:227.30px;height:14.60px;background:#464543;"></div>
<svg style="left:251.98px;top:339.68px;" width="3.44" height="4.64" viewBox="0 0 4 5.4" fill="none"><path d="M0.3 0.1L3.5 2.7L0.3 5.3Z" fill="#e4e4e4"/></svg>
<span class="t" style="left:259px;top:335.5px;color:#e4e4e4;font-weight:700;transform:perspective(1000px) translate3d(0,0.70px,0.1px) rotateX(0.5deg) scaleX(0.93);">Material ID</span>
<svg style="left:467.70px;top:337.60px;" width="2.6" height="8.6" viewBox="0 0 2.6 8.60" fill="none"><rect x="0.5" y="0.50" width="1.6" height="1.6" fill="#e2ecf4"/><rect x="0.5" y="3.50" width="1.6" height="1.6" fill="#e2ecf4"/><rect x="0.5" y="6.50" width="1.6" height="1.6" fill="#e2ecf4"/></svg>
<div style="left:249.00px;top:350.20px;width:227.30px;height:15.00px;background:#464543;"></div>
<svg style="left:251.98px;top:355.48px;" width="3.44" height="4.64" viewBox="0 0 4 5.4" fill="none"><path d="M0.3 0.1L3.5 2.7L0.3 5.3Z" fill="#e4e4e4"/></svg>
<span class="t" style="left:259px;top:351.5px;color:#e4e4e4;font-weight:700;transform:perspective(1000px) translate3d(0,0.50px,0.1px) rotateX(0.5deg) scaleX(0.93);">Binding</span>
<div style="left:455.80px;top:355.00px;width:13px;height:5.4px;border-radius:2.7px;background:#a3bfd6;"></div><div style="left:464.60px;top:353.40px;width:8.6px;height:8.6px;border-radius:50%;background:#e9ebec;box-shadow:0 0.6px 1.2px rgba(0,0,0,.6);"></div>
<div style="left:249.00px;top:368.10px;width:227.30px;height:1.00px;background:#464646;"></div>
<span class="t" style="left:249px;top:374.5px;color:#a8a8a8;transform:perspective(1000px) translate3d(0,0.40px,0.1px) rotateX(0.5deg);">Can be Overridden</span>
<svg style="left:323.00px;top:376.80px;" width="7" height="7" viewBox="0 0 7 7" fill="none"><rect x="0" y="0" width="7" height="7" fill="#7d7d7d"/><path d="M1.3 3.6L2.9 5.4L5.9 1.2" stroke="#ffffff" stroke-width="1.15" fill="none"/></svg></div>
<svg class="arrow" width="1058" height="593" viewBox="0 0 1058 593">
<path d="M518.6 327.6H546" stroke="#3b3b3b" stroke-width="3" stroke-linecap="round" fill="none"/>
<path d="M546.2 322.3L553 327.6L546.2 332.9Z" fill="#3b3b3b" stroke="#3b3b3b" stroke-width="1.8" stroke-linejoin="round"/>
<path d="M930.7 244.5L931.2 245.7L931.8 247.4L932.7 249.4L933.6 251.6L934.5 253.7L935.5 255.6L936.5 257.4L937.6 259.1L938.7 260.8L939.8 262.4L941.0 264.1L942.3 265.7L943.7 267.3L945.2 268.8L946.8 270.4L948.4 271.8L949.9 273.2L951.3 274.6L952.7 275.9L954.0 277.1L955.3 278.3L956.6 279.4L958.0 280.6L959.5 281.7L961.1 282.8L962.8 283.9L964.6 284.9L966.3 285.9L968.1 286.9L969.9 287.8L971.6 288.7L973.3 289.5L975.0 290.2L976.8 291.0L978.5 291.6L980.2 292.3L982.0 292.9L983.7 293.4L985.5 293.9L987.3 294.4L989.0 294.8L990.5 295.2L992.0 295.5L993.5 295.8L994.9 295.9L996.1 296.1L997.1 296.2L997.8 296.3L998.2 294.1L997.4 294.0L996.4 293.8L995.2 293.6L993.9 293.4L992.5 293.1L991.1 292.8L989.6 292.4L988.0 291.9L986.3 291.4L984.6 290.8L982.9 290.2L981.2 289.5L979.6 288.9L977.9 288.2L976.3 287.4L974.6 286.7L973.0 285.8L971.3 285.0L969.7 284.1L968.0 283.1L966.3 282.1L964.6 281.0L963.0 280.0L961.5 278.9L960.1 277.9L958.8 276.8L957.5 275.7L956.2 274.6L954.9 273.5L953.5 272.2L952.0 270.9L950.4 269.6L948.8 268.2L947.2 266.8L945.7 265.4L944.3 263.9L942.9 262.5L941.6 261.0L940.4 259.5L939.2 258.0L938.0 256.4L936.9 254.8L935.8 253.0L934.6 251.0L933.6 249.0L932.6 247.1L931.7 245.5L931.1 244.3Z" fill="#d81b1b"/><path d="M990.3 287.6L991.3 286.9L1003.3 294.8L1003.3 295.7L993.1 301.6L992.1 300.6L997.0 296.2L996.2 293.2Z" fill="#d81b1b" stroke="#d81b1b" stroke-width="0.5" stroke-linejoin="round"/>
</svg>
</body></html>
